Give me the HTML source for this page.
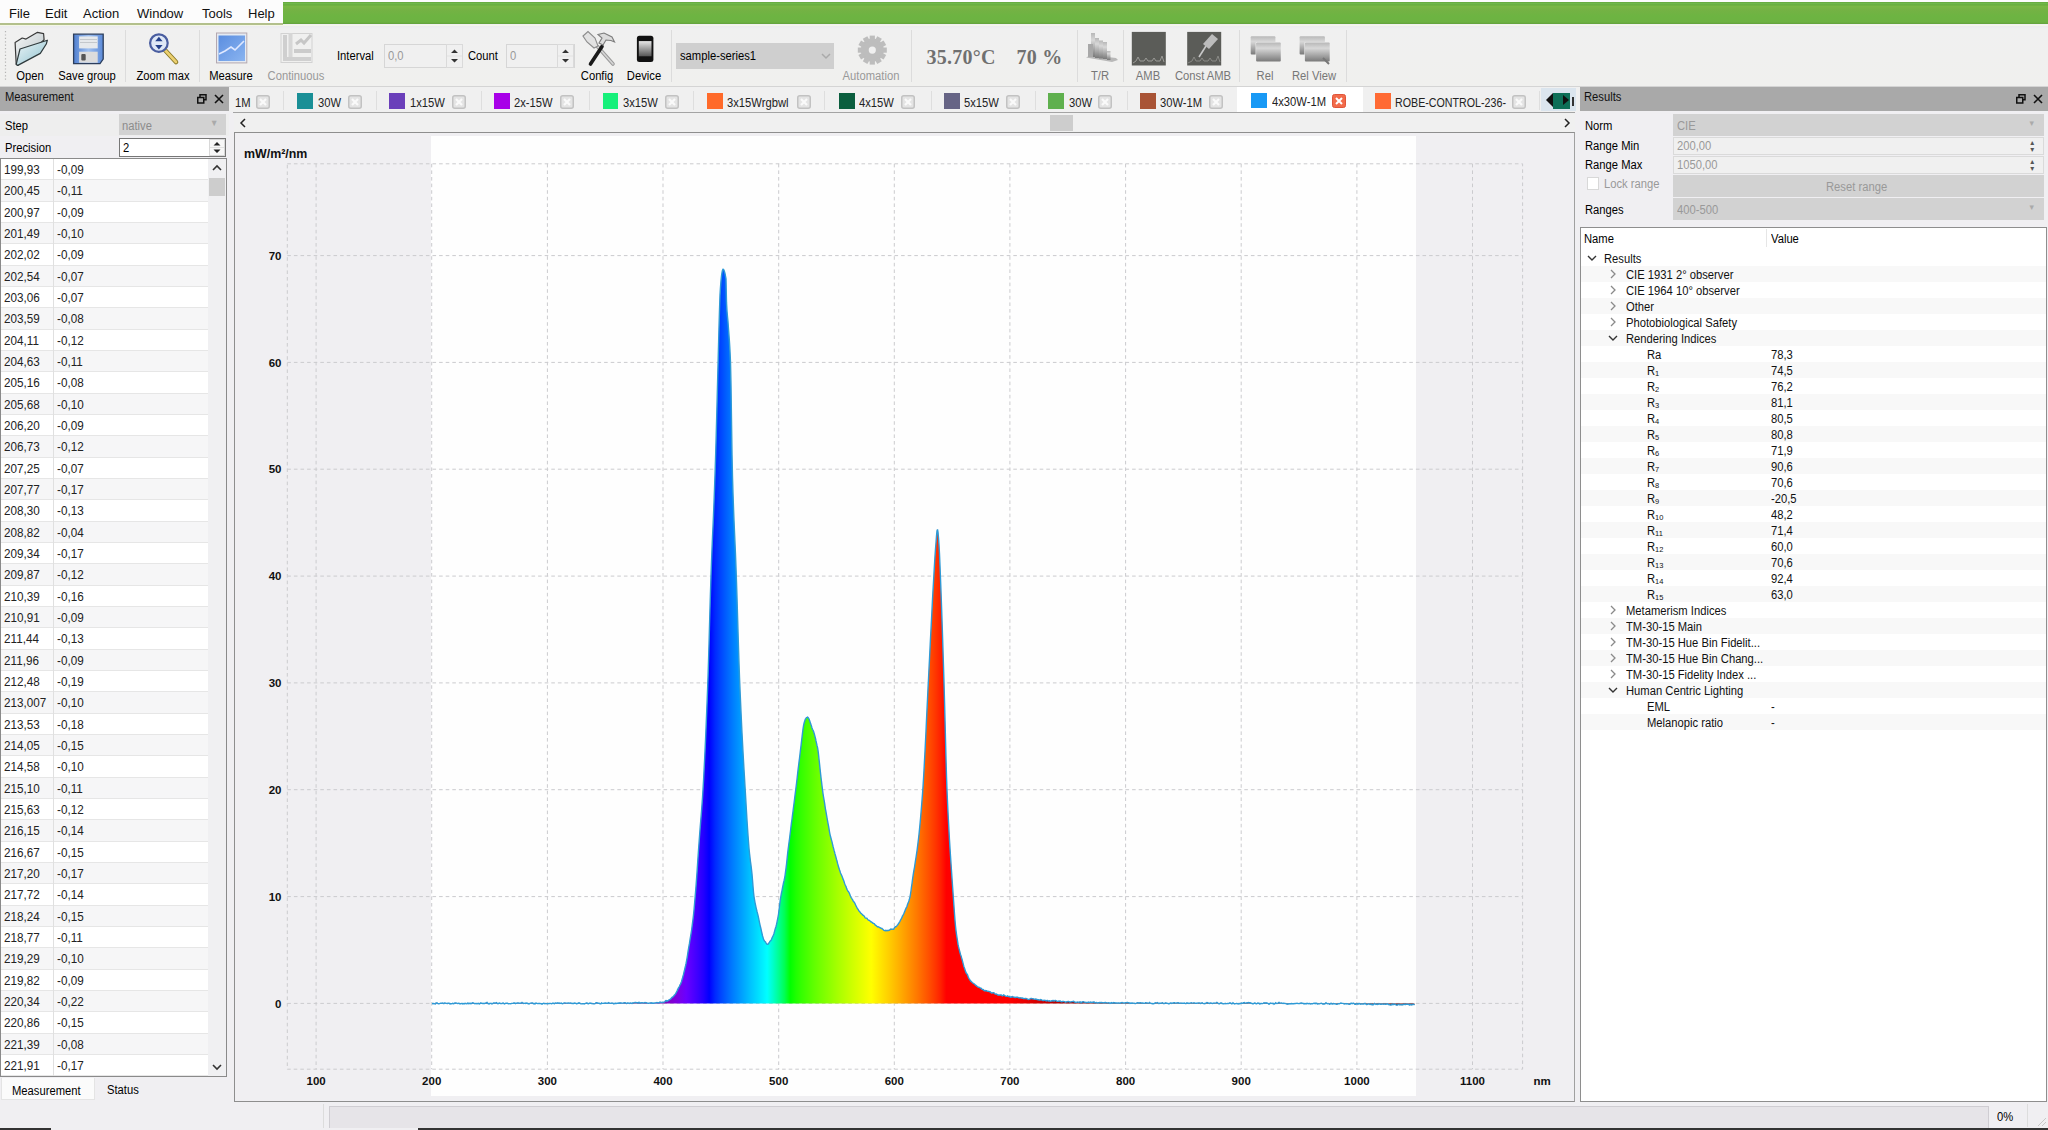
<!DOCTYPE html><html><head><meta charset="utf-8"><style>
*{box-sizing:border-box;margin:0;padding:0}
html,body{width:2048px;height:1130px;overflow:hidden;background:#f0eff2;font-family:"Liberation Sans", sans-serif;font-size:12px;color:#000}
.ab{position:absolute}
.t{position:absolute;white-space:nowrap;line-height:1;transform:scaleX(.935);transform-origin:0 0}
.c{transform-origin:50% 0}
.n{transform:none}
</style></head><body>
<div class="ab" style="left:0;top:0;width:2048px;height:23px;background:#fcfcfc"></div><div class="ab" style="left:283px;top:2px;width:1765px;height:22px;background:linear-gradient(#64a63c 0,#70b84a 1.5px,#66ac3c 3px,#7ab844 4px,#74b244 8px,#6db442 14px,#6db242 20px,#62a03c 22px)"></div><div class="ab" style="left:0;top:23px;width:283px;height:1.6px;background:#b3c08c"></div><div class="ab" style="left:0;top:24.5px;width:2048px;height:1.5px;background:#f4f7e6"></div><div class="t n" style="left:9px;top:7px;font-size:13px;color:#111">File</div><div class="t n" style="left:45px;top:7px;font-size:13px;color:#111">Edit</div><div class="t n" style="left:83px;top:7px;font-size:13px;color:#111">Action</div><div class="t n" style="left:137px;top:7px;font-size:13px;color:#111">Window</div><div class="t n" style="left:202px;top:7px;font-size:13px;color:#111">Tools</div><div class="t n" style="left:248px;top:7px;font-size:13px;color:#111">Help</div><div class="ab" style="left:0;top:26px;width:2048px;height:60px;background:linear-gradient(#ebebef 0,#f0f0f0 3px,#f0f0ee 100%)"></div><div class="ab" style="left:0;top:86px;width:2048px;height:1px;background:#d4d4d4"></div><div class="t c" style="left:-30px;width:120px;text-align:center;top:70px;font-size:12px;color:#000">Open</div><div class="t c" style="left:27px;width:120px;text-align:center;top:70px;font-size:12px;color:#000">Save group</div><div class="t c" style="left:103px;width:120px;text-align:center;top:70px;font-size:12px;color:#000">Zoom max</div><div class="t c" style="left:171px;width:120px;text-align:center;top:70px;font-size:12px;color:#000">Measure</div><div class="t c" style="left:236px;width:120px;text-align:center;top:70px;font-size:12px;color:#999">Continuous</div><div class="t c" style="left:537px;width:120px;text-align:center;top:70px;font-size:12px;color:#000">Config</div><div class="t c" style="left:584px;width:120px;text-align:center;top:70px;font-size:12px;color:#000">Device</div><div class="t c" style="left:811px;width:120px;text-align:center;top:70px;font-size:12px;color:#999">Automation</div><div class="t c" style="left:1040px;width:120px;text-align:center;top:70px;font-size:12px;color:#777">T/R</div><div class="t c" style="left:1088px;width:120px;text-align:center;top:70px;font-size:12px;color:#777">AMB</div><div class="t c" style="left:1143px;width:120px;text-align:center;top:70px;font-size:12px;color:#777">Const AMB</div><div class="t c" style="left:1205px;width:120px;text-align:center;top:70px;font-size:12px;color:#777">Rel</div><div class="t c" style="left:1254px;width:120px;text-align:center;top:70px;font-size:12px;color:#777">Rel View</div><div class="ab" style="left:125px;top:30px;width:1px;height:52px;background:#dcdcdc"></div><div class="ab" style="left:199px;top:30px;width:1px;height:52px;background:#dcdcdc"></div><div class="ab" style="left:671px;top:30px;width:1px;height:52px;background:#dcdcdc"></div><div class="ab" style="left:911px;top:30px;width:1px;height:52px;background:#dcdcdc"></div><div class="ab" style="left:1077px;top:30px;width:1px;height:52px;background:#dcdcdc"></div><div class="ab" style="left:1123px;top:30px;width:1px;height:52px;background:#dcdcdc"></div><div class="ab" style="left:1239px;top:30px;width:1px;height:52px;background:#dcdcdc"></div><div class="ab" style="left:1346px;top:30px;width:1px;height:52px;background:#dcdcdc"></div><div class="t" style="left:337px;top:50px;font-size:12px">Interval</div><div class="ab" style="left:384px;top:44px;width:79px;height:24px;border:1px solid #d6d6d6;background:#f0f0f0"></div><div class="t" style="left:388px;top:50px;font-size:12px;color:#999">0,0</div><div class="t" style="left:468px;top:50px;font-size:12px">Count</div><div class="ab" style="left:506px;top:44px;width:69px;height:24px;border:1px solid #d6d6d6;background:#f0f0f0"></div><div class="t" style="left:510px;top:50px;font-size:12px;color:#999">0</div><div class="ab" style="left:676px;top:43px;width:158px;height:26px;background:#cfcfcf"></div><div class="t" style="left:680px;top:50px;font-size:12px">sample-series1</div><svg class="ab" style="left:820px;top:52px" width="12" height="8"><path d="M2 2 L6 6 L10 2" fill="none" stroke="#aaa" stroke-width="1.5"/></svg><svg class="ab" style="left:446px;top:44px" width="17" height="24"><rect x="0.5" y="0.5" width="16" height="23" fill="#f0f0f0" stroke="#dadada"/><line x1="1" y1="12" x2="16" y2="12" stroke="#e2e2e2"/><path d="M5 9 L8.5 5.5 L12 9 Z M5 15 L8.5 18.5 L12 15 Z" fill="#333"/></svg><svg class="ab" style="left:557px;top:44px" width="17" height="24"><rect x="0.5" y="0.5" width="16" height="23" fill="#f0f0f0" stroke="#dadada"/><line x1="1" y1="12" x2="16" y2="12" stroke="#e2e2e2"/><path d="M5 9 L8.5 5.5 L12 9 Z M5 15 L8.5 18.5 L12 15 Z" fill="#333"/></svg><div class="t" style="left:926.5px;top:46.8px;font-family:'Liberation Serif',serif;font-size:20px;font-weight:bold;color:#707070;transform:none;letter-spacing:.25px">35.70°C</div><div class="t" style="left:1016.5px;top:46.8px;font-family:'Liberation Serif',serif;font-size:20px;font-weight:bold;color:#707070;transform:none;letter-spacing:.25px">70 %</div>
<svg class="ab" style="left:0;top:0" width="1400" height="90" viewBox="0 0 1400 90">
<defs>
 <linearGradient id="fg1" x1="0" y1="0" x2="1" y2="1"><stop offset="0" stop-color="#f4f6f6"/><stop offset="1" stop-color="#b8c2c6"/></linearGradient>
 <linearGradient id="fg2" x1="0" y1="0" x2="1" y2="1"><stop offset="0" stop-color="#eef6f8"/><stop offset="1" stop-color="#8fc2cf"/></linearGradient>
 <linearGradient id="sv" x1="0" y1="0" x2="1" y2="0"><stop offset="0" stop-color="#4f7fd0"/><stop offset=".5" stop-color="#9fc0f0"/><stop offset="1" stop-color="#5b8ad8"/></linearGradient>
 <linearGradient id="ph" x1="0" y1="0" x2="0" y2="1"><stop offset="0" stop-color="#e8e8e8"/><stop offset="1" stop-color="#555"/></linearGradient>
 <linearGradient id="rl" x1="0" y1="0" x2="0" y2="1"><stop offset="0" stop-color="#b8b8b8"/><stop offset=".3" stop-color="#d8d8d8"/><stop offset="1" stop-color="#7a7a7a"/></linearGradient>
 <linearGradient id="ms" x1="0" y1="0" x2="1" y2="1"><stop offset="0" stop-color="#5b8ee0"/><stop offset="1" stop-color="#8ab4f0"/></linearGradient>
</defs>
<!-- Open -->
<path d="M15.1 42.4 L22.2 38 L26 39.1 L37.5 32.3 L43.6 33.7 L44.1 39.7 L17.8 65.4 L16.2 64.3 Z" fill="url(#fg1)" stroke="#3a3a3a" stroke-width="1.2" stroke-linejoin="round"/>
<path d="M20 49 L47.4 40.2 L46.3 44 L40.3 53.4 L17.8 65.4 L16.2 64.3 Z" fill="url(#fg2)" stroke="#2f3a3c" stroke-width="1.2" stroke-linejoin="round"/>
<!-- Save -->
<path d="M73.6 34.2 H103.2 V59 L100 63.7 H73.6 Z" fill="url(#sv)" stroke="#2c3e5c" stroke-width="1.3"/>
<rect x="79.1" y="36.4" width="18.6" height="12" fill="#e6e9ec"/>
<line x1="80" y1="39.5" x2="97" y2="39.5" stroke="#c4c8cc" stroke-width="1"/><line x1="80" y1="42.5" x2="97" y2="42.5" stroke="#c4c8cc" stroke-width="1"/>
<rect x="79.1" y="51.7" width="18.6" height="11" fill="#dcdcdc"/>
<rect x="81.3" y="53.9" width="4.4" height="6.6" rx="1" fill="#555"/>
<!-- Zoom max -->
<line x1="164" y1="49" x2="176" y2="62" stroke="#8a7a28" stroke-width="4.6" stroke-linecap="round"/>
<line x1="164" y1="49" x2="176" y2="62" stroke="#ecd070" stroke-width="2.6" stroke-linecap="round"/>
<circle cx="158.9" cy="43.1" r="8.8" fill="#dfe8f6" stroke="#4a5ea0" stroke-width="2.2"/>
<path d="M158.9 36.8 L162.6 41.2 H155.2 Z M158.9 49.4 L162.6 45 H155.2 Z" fill="#24408a"/>
<!-- Measure -->
<rect x="216.5" y="33" width="30.3" height="29.9" fill="#e4eaf2" stroke="#b4a8b0" stroke-width="1"/>
<rect x="218.5" y="35.5" width="26.5" height="25.5" fill="url(#ms)"/>
<path d="M219 54 L225 51 L231 47 L235 50 L244 41" fill="none" stroke="#dfe8ff" stroke-width="1.6"/>
<!-- Continuous -->
<rect x="281" y="33.5" width="31" height="29" fill="none" stroke="#d2d2d2" stroke-width="1"/>
<rect x="283" y="35" width="4" height="22" fill="#cfcfcf"/><rect x="288.5" y="33" width="4" height="24" fill="#d6d6d6"/>
<path d="M296 44 L301 40 L304 43 L311 35" stroke="#c6c6c6" stroke-width="3" fill="none"/>
<rect x="294" y="49" width="17" height="4" fill="#cbcbcb"/><rect x="283" y="57" width="28" height="4" fill="#d0d0d0"/>
<!-- Config -->
<path d="M597.5 46.5 L613 64" stroke="#9a9a9a" stroke-width="3.6" stroke-linecap="round"/>
<path d="M597.5 46.5 L613 64" stroke="#d6d6d6" stroke-width="1.6" stroke-linecap="round"/>
<path d="M583 36 L588 31.5 L595 38 L598 46 L594 48 L587 42 Z" fill="#e2e2e2" stroke="#8c8c8c" stroke-width="1.1"/>
<path d="M602 46.5 L590.5 64" stroke="#1a1a1a" stroke-width="3.6" stroke-linecap="round"/>
<path d="M598 34.5 L604 33 L612 37 L614.5 42 L611 40.5 L606 40 L603 45 L599 43 L602 38 Z" fill="#dcdcdc" stroke="#7c7c7c" stroke-width="1.1"/>
<!-- Device -->
<rect x="636.9" y="35.8" width="16.5" height="26.3" rx="2.5" fill="#111"/>
<rect x="638.8" y="41.1" width="12.7" height="15.2" fill="url(#ph)"/>
<!-- Automation gear -->
<g transform="translate(872.3 50.1)" fill="#bdbdbd">
 <circle r="11.5"/>
 <rect x="-2.6" y="-14.5" width="5.2" height="5" transform="rotate(0)"/><rect x="-2.6" y="-14.5" width="5.2" height="5" transform="rotate(30)"/><rect x="-2.6" y="-14.5" width="5.2" height="5" transform="rotate(60)"/><rect x="-2.6" y="-14.5" width="5.2" height="5" transform="rotate(90)"/><rect x="-2.6" y="-14.5" width="5.2" height="5" transform="rotate(120)"/><rect x="-2.6" y="-14.5" width="5.2" height="5" transform="rotate(150)"/><rect x="-2.6" y="-14.5" width="5.2" height="5" transform="rotate(180)"/><rect x="-2.6" y="-14.5" width="5.2" height="5" transform="rotate(210)"/><rect x="-2.6" y="-14.5" width="5.2" height="5" transform="rotate(240)"/><rect x="-2.6" y="-14.5" width="5.2" height="5" transform="rotate(270)"/><rect x="-2.6" y="-14.5" width="5.2" height="5" transform="rotate(300)"/><rect x="-2.6" y="-14.5" width="5.2" height="5" transform="rotate(330)"/>
 <circle r="3.6" fill="#f0f0f0"/>
</g>
<!-- T/R -->
<path d="M1086 57.5 L1112 62 L1118 60 L1116 58 L1091 55 Z" fill="#b8b8b8"/>
<rect x="1091" y="33" width="4" height="24" fill="url(#rl)"/><rect x="1095" y="38" width="4" height="20" fill="url(#rl)"/>
<rect x="1099" y="40.5" width="4" height="18" fill="url(#rl)"/><rect x="1103" y="42" width="4" height="17" fill="url(#rl)"/>
<rect x="1107" y="51" width="3.5" height="9" fill="url(#rl)"/><rect x="1088" y="44" width="5" height="13" fill="#a8a8a8"/>
<!-- AMB -->
<rect x="1131.8" y="31.9" width="34" height="33.6" fill="#5b5c58"/>
<path d="M1133 63 L1136 61 L1138 57 L1140 61 L1144 61 L1146 58 L1148 61 L1152 61 L1154 58 L1156 61 L1160 61 L1162 56 L1164 62" fill="none" stroke="#9a9a96" stroke-width="1"/>
<!-- Const AMB -->
<rect x="1187.2" y="31.9" width="34" height="33.6" fill="#5b5c58"/>
<path d="M1188 63 L1192 61 L1194 57 L1196 61 L1200 61 L1202 58 L1204 61 L1208 61 L1210 58 L1212 61 L1216 61 L1218 56 L1220 62" fill="none" stroke="#8a8a86" stroke-width="1"/>
<path d="M1199 57 L1206 46" stroke="#c8c8c8" stroke-width="1.6"/>
<path d="M1203 44 L1212 34 L1218 39 L1209 49 Z" fill="#bcbcbc"/>
<!-- Rel -->
<rect x="1250.7" y="36.2" width="24.7" height="18.3" rx="1" fill="url(#rl)"/>
<rect x="1255.6" y="42.1" width="25.2" height="19.3" rx="1" fill="#f0f0f0"/>
<rect x="1256.1" y="42.6" width="24.7" height="18.8" rx="1" fill="url(#rl)"/>
<!-- Rel View -->
<rect x="1299.6" y="36.2" width="25.3" height="18.3" rx="1" fill="url(#rl)"/>
<rect x="1304.4" y="42.1" width="25.3" height="19.3" rx="1" fill="#f0f0f0"/>
<rect x="1304.9" y="42.6" width="24.8" height="18.8" rx="1" fill="url(#rl)"/>
<path d="M1323 58 L1329 64" stroke="#777" stroke-width="2"/>
</svg>
<svg class="ab" style="left:4px;top:30px" width="3" height="52"><line x1="1.5" y1="1" x2="1.5" y2="52" stroke="#b4b4b4" stroke-width="1.2" stroke-dasharray="1.2 2.2"/></svg><div class="ab" style="left:0;top:87px;width:229px;height:24px;background:#a9a9a9"></div><div class="t" style="left:5px;top:91px;font-size:12px;color:#111">Measurement</div><svg class="ab" style="left:197px;top:94px" width="10" height="10" viewBox="0 0 10 10"><rect x="3" y="0.75" width="6" height="5" fill="none" stroke="#111" stroke-width="1.5"/><rect x="0.75" y="3.5" width="6" height="5.5" fill="#a9a9a9" stroke="#111" stroke-width="1.5"/></svg><svg class="ab" style="left:214px;top:94px" width="10" height="10" viewBox="0 0 10 10"><path d="M1 1 L9 9 M9 1 L1 9" stroke="#111" stroke-width="1.6"/></svg><div class="ab" style="left:0;top:114px;width:229px;height:22px;background:#eeeeee"></div><div class="t" style="left:5px;top:120px">Step</div><div class="ab" style="left:119px;top:114px;width:107px;height:21px;background:#d2d2d2"></div><div class="t" style="left:122px;top:120px;color:#8c8c8c">native</div><div class="t" style="left:210px;top:119px;color:#aaa;font-size:9px">&#9660;</div><div class="t" style="left:5px;top:142px">Precision</div><div class="ab" style="left:119px;top:138px;width:107px;height:19px;background:#fff;border:1px solid #777"></div><div class="t" style="left:123px;top:142px">2</div><svg class="ab" style="left:209px;top:139px" width="16" height="17"><rect x="0.5" y="0.5" width="15" height="16" fill="#f7f7f7" stroke="#d8d8d8"/><line x1="1" y1="8.5" x2="15" y2="8.5" stroke="#e0e0e0"/><path d="M4.5 6.5 L8 3 L11.5 6.5 Z M4.5 10.5 L8 14 L11.5 10.5 Z" fill="#222"/></svg><div class="ab" style="left:0;top:158px;width:227px;height:919px;background:#fff;border:1px solid #8a8a8a"></div><div class="ab" style="left:1px;top:159.00px;width:207px;height:21.33px;background:#fff;border-bottom:1px solid #e6e6e6"></div><div class="t" style="left:4px;top:164.00px;font-size:12.5px;color:#222">199,93</div><div class="t" style="left:57px;top:164.00px;font-size:12.5px;color:#222">-0,09</div><div class="ab" style="left:1px;top:180.33px;width:207px;height:21.33px;background:#f6f6f7;border-bottom:1px solid #e6e6e6"></div><div class="t" style="left:4px;top:185.33px;font-size:12.5px;color:#222">200,45</div><div class="t" style="left:57px;top:185.33px;font-size:12.5px;color:#222">-0,11</div><div class="ab" style="left:1px;top:201.66px;width:207px;height:21.33px;background:#fff;border-bottom:1px solid #e6e6e6"></div><div class="t" style="left:4px;top:206.66px;font-size:12.5px;color:#222">200,97</div><div class="t" style="left:57px;top:206.66px;font-size:12.5px;color:#222">-0,09</div><div class="ab" style="left:1px;top:222.99px;width:207px;height:21.33px;background:#f6f6f7;border-bottom:1px solid #e6e6e6"></div><div class="t" style="left:4px;top:227.99px;font-size:12.5px;color:#222">201,49</div><div class="t" style="left:57px;top:227.99px;font-size:12.5px;color:#222">-0,10</div><div class="ab" style="left:1px;top:244.32px;width:207px;height:21.33px;background:#fff;border-bottom:1px solid #e6e6e6"></div><div class="t" style="left:4px;top:249.32px;font-size:12.5px;color:#222">202,02</div><div class="t" style="left:57px;top:249.32px;font-size:12.5px;color:#222">-0,09</div><div class="ab" style="left:1px;top:265.65px;width:207px;height:21.33px;background:#f6f6f7;border-bottom:1px solid #e6e6e6"></div><div class="t" style="left:4px;top:270.65px;font-size:12.5px;color:#222">202,54</div><div class="t" style="left:57px;top:270.65px;font-size:12.5px;color:#222">-0,07</div><div class="ab" style="left:1px;top:286.98px;width:207px;height:21.33px;background:#fff;border-bottom:1px solid #e6e6e6"></div><div class="t" style="left:4px;top:291.98px;font-size:12.5px;color:#222">203,06</div><div class="t" style="left:57px;top:291.98px;font-size:12.5px;color:#222">-0,07</div><div class="ab" style="left:1px;top:308.31px;width:207px;height:21.33px;background:#f6f6f7;border-bottom:1px solid #e6e6e6"></div><div class="t" style="left:4px;top:313.31px;font-size:12.5px;color:#222">203,59</div><div class="t" style="left:57px;top:313.31px;font-size:12.5px;color:#222">-0,08</div><div class="ab" style="left:1px;top:329.64px;width:207px;height:21.33px;background:#fff;border-bottom:1px solid #e6e6e6"></div><div class="t" style="left:4px;top:334.64px;font-size:12.5px;color:#222">204,11</div><div class="t" style="left:57px;top:334.64px;font-size:12.5px;color:#222">-0,12</div><div class="ab" style="left:1px;top:350.97px;width:207px;height:21.33px;background:#f6f6f7;border-bottom:1px solid #e6e6e6"></div><div class="t" style="left:4px;top:355.97px;font-size:12.5px;color:#222">204,63</div><div class="t" style="left:57px;top:355.97px;font-size:12.5px;color:#222">-0,11</div><div class="ab" style="left:1px;top:372.30px;width:207px;height:21.33px;background:#fff;border-bottom:1px solid #e6e6e6"></div><div class="t" style="left:4px;top:377.30px;font-size:12.5px;color:#222">205,16</div><div class="t" style="left:57px;top:377.30px;font-size:12.5px;color:#222">-0,08</div><div class="ab" style="left:1px;top:393.63px;width:207px;height:21.33px;background:#f6f6f7;border-bottom:1px solid #e6e6e6"></div><div class="t" style="left:4px;top:398.63px;font-size:12.5px;color:#222">205,68</div><div class="t" style="left:57px;top:398.63px;font-size:12.5px;color:#222">-0,10</div><div class="ab" style="left:1px;top:414.96px;width:207px;height:21.33px;background:#fff;border-bottom:1px solid #e6e6e6"></div><div class="t" style="left:4px;top:419.96px;font-size:12.5px;color:#222">206,20</div><div class="t" style="left:57px;top:419.96px;font-size:12.5px;color:#222">-0,09</div><div class="ab" style="left:1px;top:436.29px;width:207px;height:21.33px;background:#f6f6f7;border-bottom:1px solid #e6e6e6"></div><div class="t" style="left:4px;top:441.29px;font-size:12.5px;color:#222">206,73</div><div class="t" style="left:57px;top:441.29px;font-size:12.5px;color:#222">-0,12</div><div class="ab" style="left:1px;top:457.62px;width:207px;height:21.33px;background:#fff;border-bottom:1px solid #e6e6e6"></div><div class="t" style="left:4px;top:462.62px;font-size:12.5px;color:#222">207,25</div><div class="t" style="left:57px;top:462.62px;font-size:12.5px;color:#222">-0,07</div><div class="ab" style="left:1px;top:478.95px;width:207px;height:21.33px;background:#f6f6f7;border-bottom:1px solid #e6e6e6"></div><div class="t" style="left:4px;top:483.95px;font-size:12.5px;color:#222">207,77</div><div class="t" style="left:57px;top:483.95px;font-size:12.5px;color:#222">-0,17</div><div class="ab" style="left:1px;top:500.28px;width:207px;height:21.33px;background:#fff;border-bottom:1px solid #e6e6e6"></div><div class="t" style="left:4px;top:505.28px;font-size:12.5px;color:#222">208,30</div><div class="t" style="left:57px;top:505.28px;font-size:12.5px;color:#222">-0,13</div><div class="ab" style="left:1px;top:521.61px;width:207px;height:21.33px;background:#f6f6f7;border-bottom:1px solid #e6e6e6"></div><div class="t" style="left:4px;top:526.61px;font-size:12.5px;color:#222">208,82</div><div class="t" style="left:57px;top:526.61px;font-size:12.5px;color:#222">-0,04</div><div class="ab" style="left:1px;top:542.94px;width:207px;height:21.33px;background:#fff;border-bottom:1px solid #e6e6e6"></div><div class="t" style="left:4px;top:547.94px;font-size:12.5px;color:#222">209,34</div><div class="t" style="left:57px;top:547.94px;font-size:12.5px;color:#222">-0,17</div><div class="ab" style="left:1px;top:564.27px;width:207px;height:21.33px;background:#f6f6f7;border-bottom:1px solid #e6e6e6"></div><div class="t" style="left:4px;top:569.27px;font-size:12.5px;color:#222">209,87</div><div class="t" style="left:57px;top:569.27px;font-size:12.5px;color:#222">-0,12</div><div class="ab" style="left:1px;top:585.60px;width:207px;height:21.33px;background:#fff;border-bottom:1px solid #e6e6e6"></div><div class="t" style="left:4px;top:590.60px;font-size:12.5px;color:#222">210,39</div><div class="t" style="left:57px;top:590.60px;font-size:12.5px;color:#222">-0,16</div><div class="ab" style="left:1px;top:606.93px;width:207px;height:21.33px;background:#f6f6f7;border-bottom:1px solid #e6e6e6"></div><div class="t" style="left:4px;top:611.93px;font-size:12.5px;color:#222">210,91</div><div class="t" style="left:57px;top:611.93px;font-size:12.5px;color:#222">-0,09</div><div class="ab" style="left:1px;top:628.26px;width:207px;height:21.33px;background:#fff;border-bottom:1px solid #e6e6e6"></div><div class="t" style="left:4px;top:633.26px;font-size:12.5px;color:#222">211,44</div><div class="t" style="left:57px;top:633.26px;font-size:12.5px;color:#222">-0,13</div><div class="ab" style="left:1px;top:649.59px;width:207px;height:21.33px;background:#f6f6f7;border-bottom:1px solid #e6e6e6"></div><div class="t" style="left:4px;top:654.59px;font-size:12.5px;color:#222">211,96</div><div class="t" style="left:57px;top:654.59px;font-size:12.5px;color:#222">-0,09</div><div class="ab" style="left:1px;top:670.92px;width:207px;height:21.33px;background:#fff;border-bottom:1px solid #e6e6e6"></div><div class="t" style="left:4px;top:675.92px;font-size:12.5px;color:#222">212,48</div><div class="t" style="left:57px;top:675.92px;font-size:12.5px;color:#222">-0,19</div><div class="ab" style="left:1px;top:692.25px;width:207px;height:21.33px;background:#f6f6f7;border-bottom:1px solid #e6e6e6"></div><div class="t" style="left:4px;top:697.25px;font-size:12.5px;color:#222">213,007</div><div class="t" style="left:57px;top:697.25px;font-size:12.5px;color:#222">-0,10</div><div class="ab" style="left:1px;top:713.58px;width:207px;height:21.33px;background:#fff;border-bottom:1px solid #e6e6e6"></div><div class="t" style="left:4px;top:718.58px;font-size:12.5px;color:#222">213,53</div><div class="t" style="left:57px;top:718.58px;font-size:12.5px;color:#222">-0,18</div><div class="ab" style="left:1px;top:734.91px;width:207px;height:21.33px;background:#f6f6f7;border-bottom:1px solid #e6e6e6"></div><div class="t" style="left:4px;top:739.91px;font-size:12.5px;color:#222">214,05</div><div class="t" style="left:57px;top:739.91px;font-size:12.5px;color:#222">-0,15</div><div class="ab" style="left:1px;top:756.24px;width:207px;height:21.33px;background:#fff;border-bottom:1px solid #e6e6e6"></div><div class="t" style="left:4px;top:761.24px;font-size:12.5px;color:#222">214,58</div><div class="t" style="left:57px;top:761.24px;font-size:12.5px;color:#222">-0,10</div><div class="ab" style="left:1px;top:777.57px;width:207px;height:21.33px;background:#f6f6f7;border-bottom:1px solid #e6e6e6"></div><div class="t" style="left:4px;top:782.57px;font-size:12.5px;color:#222">215,10</div><div class="t" style="left:57px;top:782.57px;font-size:12.5px;color:#222">-0,11</div><div class="ab" style="left:1px;top:798.90px;width:207px;height:21.33px;background:#fff;border-bottom:1px solid #e6e6e6"></div><div class="t" style="left:4px;top:803.90px;font-size:12.5px;color:#222">215,63</div><div class="t" style="left:57px;top:803.90px;font-size:12.5px;color:#222">-0,12</div><div class="ab" style="left:1px;top:820.23px;width:207px;height:21.33px;background:#f6f6f7;border-bottom:1px solid #e6e6e6"></div><div class="t" style="left:4px;top:825.23px;font-size:12.5px;color:#222">216,15</div><div class="t" style="left:57px;top:825.23px;font-size:12.5px;color:#222">-0,14</div><div class="ab" style="left:1px;top:841.56px;width:207px;height:21.33px;background:#fff;border-bottom:1px solid #e6e6e6"></div><div class="t" style="left:4px;top:846.56px;font-size:12.5px;color:#222">216,67</div><div class="t" style="left:57px;top:846.56px;font-size:12.5px;color:#222">-0,15</div><div class="ab" style="left:1px;top:862.89px;width:207px;height:21.33px;background:#f6f6f7;border-bottom:1px solid #e6e6e6"></div><div class="t" style="left:4px;top:867.89px;font-size:12.5px;color:#222">217,20</div><div class="t" style="left:57px;top:867.89px;font-size:12.5px;color:#222">-0,17</div><div class="ab" style="left:1px;top:884.22px;width:207px;height:21.33px;background:#fff;border-bottom:1px solid #e6e6e6"></div><div class="t" style="left:4px;top:889.22px;font-size:12.5px;color:#222">217,72</div><div class="t" style="left:57px;top:889.22px;font-size:12.5px;color:#222">-0,14</div><div class="ab" style="left:1px;top:905.55px;width:207px;height:21.33px;background:#f6f6f7;border-bottom:1px solid #e6e6e6"></div><div class="t" style="left:4px;top:910.55px;font-size:12.5px;color:#222">218,24</div><div class="t" style="left:57px;top:910.55px;font-size:12.5px;color:#222">-0,15</div><div class="ab" style="left:1px;top:926.88px;width:207px;height:21.33px;background:#fff;border-bottom:1px solid #e6e6e6"></div><div class="t" style="left:4px;top:931.88px;font-size:12.5px;color:#222">218,77</div><div class="t" style="left:57px;top:931.88px;font-size:12.5px;color:#222">-0,11</div><div class="ab" style="left:1px;top:948.21px;width:207px;height:21.33px;background:#f6f6f7;border-bottom:1px solid #e6e6e6"></div><div class="t" style="left:4px;top:953.21px;font-size:12.5px;color:#222">219,29</div><div class="t" style="left:57px;top:953.21px;font-size:12.5px;color:#222">-0,10</div><div class="ab" style="left:1px;top:969.54px;width:207px;height:21.33px;background:#fff;border-bottom:1px solid #e6e6e6"></div><div class="t" style="left:4px;top:974.54px;font-size:12.5px;color:#222">219,82</div><div class="t" style="left:57px;top:974.54px;font-size:12.5px;color:#222">-0,09</div><div class="ab" style="left:1px;top:990.87px;width:207px;height:21.33px;background:#f6f6f7;border-bottom:1px solid #e6e6e6"></div><div class="t" style="left:4px;top:995.87px;font-size:12.5px;color:#222">220,34</div><div class="t" style="left:57px;top:995.87px;font-size:12.5px;color:#222">-0,22</div><div class="ab" style="left:1px;top:1012.20px;width:207px;height:21.33px;background:#fff;border-bottom:1px solid #e6e6e6"></div><div class="t" style="left:4px;top:1017.20px;font-size:12.5px;color:#222">220,86</div><div class="t" style="left:57px;top:1017.20px;font-size:12.5px;color:#222">-0,15</div><div class="ab" style="left:1px;top:1033.53px;width:207px;height:21.33px;background:#f6f6f7;border-bottom:1px solid #e6e6e6"></div><div class="t" style="left:4px;top:1038.53px;font-size:12.5px;color:#222">221,39</div><div class="t" style="left:57px;top:1038.53px;font-size:12.5px;color:#222">-0,08</div><div class="ab" style="left:1px;top:1054.86px;width:207px;height:21.33px;background:#fff;border-bottom:1px solid #e6e6e6"></div><div class="t" style="left:4px;top:1059.86px;font-size:12.5px;color:#222">221,91</div><div class="t" style="left:57px;top:1059.86px;font-size:12.5px;color:#222">-0,17</div><div class="ab" style="left:53px;top:159px;width:1px;height:917px;background:#e0e0e0"></div><div class="ab" style="left:208px;top:159px;width:18px;height:917px;background:#f0f0f2"></div><div class="ab" style="left:209px;top:178px;width:16px;height:18px;background:#cdcdcd"></div><svg class="ab" style="left:211px;top:163px" width="12" height="10"><path d="M2 7 L6 3 L10 7" fill="none" stroke="#333" stroke-width="1.6"/></svg><svg class="ab" style="left:211px;top:1062px" width="12" height="10"><path d="M2 3 L6 7 L10 3" fill="none" stroke="#333" stroke-width="1.6"/></svg><div class="ab" style="left:1px;top:1078px;width:94px;height:22px;background:#fbfbfb;border:1px solid #e4e4e4;border-top:none"></div><div class="t" style="left:12px;top:1085px">Measurement</div><div class="t" style="left:107px;top:1084px">Status</div><div class="ab" style="left:229px;top:87px;width:1351px;height:25px;background:#f0f0f0"></div><div class="ab" style="left:233px;top:111.5px;width:1342px;height:1px;background:#a4a4a4"></div><div class="ab" style="left:283px;top:91px;width:1px;height:19px;background:#dedede"></div><div class="t" style="left:235px;top:97px;font-size:12px;color:#222;transform:scaleX(.935)">1M</div><svg class="ab" style="left:256px;top:95px" width="14" height="14"><rect x="0.75" y="0.75" width="12.5" height="12.5" rx="2" fill="#e4e4e4" stroke="#c2c2c2" stroke-width="1.5"/><path d="M4 4 L10 10 M10 4 L4 10" stroke="#fafafa" stroke-width="2.2"/></svg><div class="ab" style="left:376px;top:91px;width:1px;height:19px;background:#dedede"></div><div class="ab" style="left:297px;top:93px;width:15.5px;height:15.5px;background:#1a8f96"></div><div class="t" style="left:318px;top:97px;font-size:12px;color:#222;transform:scaleX(.935)">30W</div><svg class="ab" style="left:348px;top:95px" width="14" height="14"><rect x="0.75" y="0.75" width="12.5" height="12.5" rx="2" fill="#e4e4e4" stroke="#c2c2c2" stroke-width="1.5"/><path d="M4 4 L10 10 M10 4 L4 10" stroke="#fafafa" stroke-width="2.2"/></svg><div class="ab" style="left:480.6px;top:91px;width:1px;height:19px;background:#dedede"></div><div class="ab" style="left:389px;top:93px;width:15.5px;height:15.5px;background:#6a3fba"></div><div class="t" style="left:410px;top:97px;font-size:12px;color:#222;transform:scaleX(.935)">1x15W</div><svg class="ab" style="left:451.5px;top:95px" width="14" height="14"><rect x="0.75" y="0.75" width="12.5" height="12.5" rx="2" fill="#e4e4e4" stroke="#c2c2c2" stroke-width="1.5"/><path d="M4 4 L10 10 M10 4 L4 10" stroke="#fafafa" stroke-width="2.2"/></svg><div class="ab" style="left:588.5px;top:91px;width:1px;height:19px;background:#dedede"></div><div class="ab" style="left:494px;top:93px;width:15.5px;height:15.5px;background:#a800e8"></div><div class="t" style="left:514px;top:97px;font-size:12px;color:#222;transform:scaleX(.935)">2x-15W</div><svg class="ab" style="left:560px;top:95px" width="14" height="14"><rect x="0.75" y="0.75" width="12.5" height="12.5" rx="2" fill="#e4e4e4" stroke="#c2c2c2" stroke-width="1.5"/><path d="M4 4 L10 10 M10 4 L4 10" stroke="#fafafa" stroke-width="2.2"/></svg><div class="ab" style="left:693px;top:91px;width:1px;height:19px;background:#dedede"></div><div class="ab" style="left:602.5px;top:93px;width:15.5px;height:15.5px;background:#16f07a"></div><div class="t" style="left:622.7px;top:97px;font-size:12px;color:#222;transform:scaleX(.935)">3x15W</div><svg class="ab" style="left:665px;top:95px" width="14" height="14"><rect x="0.75" y="0.75" width="12.5" height="12.5" rx="2" fill="#e4e4e4" stroke="#c2c2c2" stroke-width="1.5"/><path d="M4 4 L10 10 M10 4 L4 10" stroke="#fafafa" stroke-width="2.2"/></svg><div class="ab" style="left:824px;top:91px;width:1px;height:19px;background:#dedede"></div><div class="ab" style="left:707px;top:93px;width:15.5px;height:15.5px;background:#ff6a2a"></div><div class="t" style="left:727px;top:97px;font-size:12px;color:#222;transform:scaleX(.935)">3x15Wrgbwl</div><svg class="ab" style="left:797px;top:95px" width="14" height="14"><rect x="0.75" y="0.75" width="12.5" height="12.5" rx="2" fill="#e4e4e4" stroke="#c2c2c2" stroke-width="1.5"/><path d="M4 4 L10 10 M10 4 L4 10" stroke="#fafafa" stroke-width="2.2"/></svg><div class="ab" style="left:931px;top:91px;width:1px;height:19px;background:#dedede"></div><div class="ab" style="left:839px;top:93px;width:15.5px;height:15.5px;background:#0b5e3e"></div><div class="t" style="left:859px;top:97px;font-size:12px;color:#222;transform:scaleX(.935)">4x15W</div><svg class="ab" style="left:901px;top:95px" width="14" height="14"><rect x="0.75" y="0.75" width="12.5" height="12.5" rx="2" fill="#e4e4e4" stroke="#c2c2c2" stroke-width="1.5"/><path d="M4 4 L10 10 M10 4 L4 10" stroke="#fafafa" stroke-width="2.2"/></svg><div class="ab" style="left:1034.7px;top:91px;width:1px;height:19px;background:#dedede"></div><div class="ab" style="left:944px;top:93px;width:15.5px;height:15.5px;background:#666485"></div><div class="t" style="left:964px;top:97px;font-size:12px;color:#222;transform:scaleX(.935)">5x15W</div><svg class="ab" style="left:1006px;top:95px" width="14" height="14"><rect x="0.75" y="0.75" width="12.5" height="12.5" rx="2" fill="#e4e4e4" stroke="#c2c2c2" stroke-width="1.5"/><path d="M4 4 L10 10 M10 4 L4 10" stroke="#fafafa" stroke-width="2.2"/></svg><div class="ab" style="left:1127px;top:91px;width:1px;height:19px;background:#dedede"></div><div class="ab" style="left:1048.4px;top:93px;width:15.5px;height:15.5px;background:#5fb04e"></div><div class="t" style="left:1069px;top:97px;font-size:12px;color:#222;transform:scaleX(.935)">30W</div><svg class="ab" style="left:1098px;top:95px" width="14" height="14"><rect x="0.75" y="0.75" width="12.5" height="12.5" rx="2" fill="#e4e4e4" stroke="#c2c2c2" stroke-width="1.5"/><path d="M4 4 L10 10 M10 4 L4 10" stroke="#fafafa" stroke-width="2.2"/></svg><div class="ab" style="left:1237px;top:91px;width:1px;height:19px;background:#dedede"></div><div class="ab" style="left:1140px;top:93px;width:15.5px;height:15.5px;background:#a95436"></div><div class="t" style="left:1160.4px;top:97px;font-size:12px;color:#222;transform:scaleX(.935)">30W-1M</div><svg class="ab" style="left:1208.7px;top:95px" width="14" height="14"><rect x="0.75" y="0.75" width="12.5" height="12.5" rx="2" fill="#e4e4e4" stroke="#c2c2c2" stroke-width="1.5"/><path d="M4 4 L10 10 M10 4 L4 10" stroke="#fafafa" stroke-width="2.2"/></svg><div class="ab" style="left:1237px;top:87px;width:126px;height:25px;background:#ffffff"></div><div class="ab" style="left:1251.4px;top:92.5px;width:15.5px;height:15.5px;background:#1899f5"></div><div class="t" style="left:1272px;top:96px;font-size:12px;color:#222;transform:scaleX(.935)">4x30W-1M</div><svg class="ab" style="left:1332.4px;top:94px" width="14" height="14"><rect x="0.5" y="0.5" width="13" height="13" rx="2" fill="#f26b4a" stroke="#e0553a"/><path d="M4 4 L10 10 M10 4 L4 10" stroke="#fff" stroke-width="2"/></svg><div class="ab" style="left:1539px;top:91px;width:1px;height:19px;background:#dedede"></div><div class="ab" style="left:1375px;top:93px;width:15.5px;height:15.5px;background:#ff6a34"></div><div class="t" style="left:1394.6px;top:97px;font-size:12px;color:#222;transform:scaleX(.89)">ROBE-CONTROL-236-</div><svg class="ab" style="left:1511.8px;top:95px" width="14" height="14"><rect x="0.75" y="0.75" width="12.5" height="12.5" rx="2" fill="#e4e4e4" stroke="#c2c2c2" stroke-width="1.5"/><path d="M4 4 L10 10 M10 4 L4 10" stroke="#fafafa" stroke-width="2.2"/></svg><div class="ab" style="left:1541px;top:88px;width:35px;height:23px;background:#dbe5ee"></div><svg class="ab" style="left:1545px;top:92px" width="30" height="18"><path d="M1 8 L8 1 L8 15 Z" fill="#111"/><rect x="8" y="1" width="17" height="16" fill="#0d6f57"/><path d="M18 3 L24 8 L18 13 Z" fill="#111"/><rect x="27" y="5" width="2" height="9" fill="#333"/></svg><div class="ab" style="left:234px;top:113px;width:1341px;height:19px;background:#f0f0f0"></div><svg class="ab" style="left:238px;top:117px" width="10" height="12"><path d="M7 2 L3 6 L7 10" fill="none" stroke="#222" stroke-width="1.5"/></svg><svg class="ab" style="left:1562px;top:117px" width="10" height="12"><path d="M3 2 L7 6 L3 10" fill="none" stroke="#222" stroke-width="1.5"/></svg><div class="ab" style="left:1050px;top:115px;width:23px;height:16px;background:#cdcdcd"></div><div class="ab" style="left:234px;top:132px;width:1341px;height:970px;background:#f0eff2;border:1px solid #8e8e8e;border-right-color:#a0a0a0"></div><div class="ab" style="left:431px;top:136px;width:985px;height:960px;background:#fefefe"></div><svg class="ab" style="left:0;top:0" width="2048" height="1130" viewBox="0 0 2048 1130"><defs><linearGradient id="sg" gradientUnits="userSpaceOnUse" x1="639.9" y1="0" x2="1102.5" y2="0"><stop offset="0.0000" stop-color="rgb(97,0,97)"/><stop offset="0.0125" stop-color="rgb(111,0,119)"/><stop offset="0.0250" stop-color="rgb(121,0,141)"/><stop offset="0.0375" stop-color="rgb(128,0,161)"/><stop offset="0.0500" stop-color="rgb(131,0,181)"/><stop offset="0.0625" stop-color="rgb(130,0,200)"/><stop offset="0.0750" stop-color="rgb(126,0,219)"/><stop offset="0.0875" stop-color="rgb(118,0,237)"/><stop offset="0.1000" stop-color="rgb(106,0,255)"/><stop offset="0.1125" stop-color="rgb(84,0,255)"/><stop offset="0.1250" stop-color="rgb(61,0,255)"/><stop offset="0.1375" stop-color="rgb(35,0,255)"/><stop offset="0.1500" stop-color="rgb(0,0,255)"/><stop offset="0.1625" stop-color="rgb(0,40,255)"/><stop offset="0.1750" stop-color="rgb(0,70,255)"/><stop offset="0.1875" stop-color="rgb(0,97,255)"/><stop offset="0.2000" stop-color="rgb(0,123,255)"/><stop offset="0.2125" stop-color="rgb(0,146,255)"/><stop offset="0.2250" stop-color="rgb(0,169,255)"/><stop offset="0.2375" stop-color="rgb(0,192,255)"/><stop offset="0.2500" stop-color="rgb(0,213,255)"/><stop offset="0.2625" stop-color="rgb(0,234,255)"/><stop offset="0.2750" stop-color="rgb(0,255,255)"/><stop offset="0.2875" stop-color="rgb(0,255,203)"/><stop offset="0.3000" stop-color="rgb(0,255,146)"/><stop offset="0.3125" stop-color="rgb(0,255,84)"/><stop offset="0.3250" stop-color="rgb(0,255,0)"/><stop offset="0.3375" stop-color="rgb(31,255,0)"/><stop offset="0.3500" stop-color="rgb(54,255,0)"/><stop offset="0.3625" stop-color="rgb(74,255,0)"/><stop offset="0.3750" stop-color="rgb(94,255,0)"/><stop offset="0.3875" stop-color="rgb(112,255,0)"/><stop offset="0.4000" stop-color="rgb(129,255,0)"/><stop offset="0.4125" stop-color="rgb(146,255,0)"/><stop offset="0.4250" stop-color="rgb(163,255,0)"/><stop offset="0.4375" stop-color="rgb(179,255,0)"/><stop offset="0.4500" stop-color="rgb(195,255,0)"/><stop offset="0.4625" stop-color="rgb(210,255,0)"/><stop offset="0.4750" stop-color="rgb(225,255,0)"/><stop offset="0.4875" stop-color="rgb(240,255,0)"/><stop offset="0.5000" stop-color="rgb(255,255,0)"/><stop offset="0.5125" stop-color="rgb(255,239,0)"/><stop offset="0.5250" stop-color="rgb(255,223,0)"/><stop offset="0.5375" stop-color="rgb(255,207,0)"/><stop offset="0.5500" stop-color="rgb(255,190,0)"/><stop offset="0.5625" stop-color="rgb(255,173,0)"/><stop offset="0.5750" stop-color="rgb(255,155,0)"/><stop offset="0.5875" stop-color="rgb(255,137,0)"/><stop offset="0.6000" stop-color="rgb(255,119,0)"/><stop offset="0.6125" stop-color="rgb(255,99,0)"/><stop offset="0.6250" stop-color="rgb(255,79,0)"/><stop offset="0.6375" stop-color="rgb(255,57,0)"/><stop offset="0.6500" stop-color="rgb(255,33,0)"/><stop offset="0.6625" stop-color="rgb(255,0,0)"/><stop offset="0.6750" stop-color="rgb(255,0,0)"/><stop offset="0.6875" stop-color="rgb(255,0,0)"/><stop offset="0.7000" stop-color="rgb(255,0,0)"/><stop offset="0.7125" stop-color="rgb(255,0,0)"/><stop offset="0.7250" stop-color="rgb(255,0,0)"/><stop offset="0.7375" stop-color="rgb(255,0,0)"/><stop offset="0.7500" stop-color="rgb(255,0,0)"/><stop offset="0.7625" stop-color="rgb(255,0,0)"/><stop offset="0.7750" stop-color="rgb(255,0,0)"/><stop offset="0.7875" stop-color="rgb(255,0,0)"/><stop offset="0.8000" stop-color="rgb(255,0,0)"/><stop offset="0.8125" stop-color="rgb(246,0,0)"/><stop offset="0.8250" stop-color="rgb(237,0,0)"/><stop offset="0.8375" stop-color="rgb(228,0,0)"/><stop offset="0.8500" stop-color="rgb(219,0,0)"/><stop offset="0.8625" stop-color="rgb(209,0,0)"/><stop offset="0.8750" stop-color="rgb(200,0,0)"/><stop offset="0.8875" stop-color="rgb(190,0,0)"/><stop offset="0.9000" stop-color="rgb(181,0,0)"/><stop offset="0.9125" stop-color="rgb(171,0,0)"/><stop offset="0.9250" stop-color="rgb(161,0,0)"/><stop offset="0.9375" stop-color="rgb(151,0,0)"/><stop offset="0.9500" stop-color="rgb(141,0,0)"/><stop offset="0.9625" stop-color="rgb(130,0,0)"/><stop offset="0.9750" stop-color="rgb(119,0,0)"/><stop offset="0.9875" stop-color="rgb(109,0,0)"/><stop offset="1.0000" stop-color="rgb(97,0,0)"/></linearGradient></defs><path d="M316.1,163.8 V1069.2 M431.7,163.8 V1069.2 M547.4,163.8 V1069.2 M663.0,163.8 V1069.2 M778.7,163.8 V1069.2 M894.3,163.8 V1069.2 M1009.9,163.8 V1069.2 M1125.6,163.8 V1069.2 M1241.2,163.8 V1069.2 M1356.9,163.8 V1069.2 M1472.5,163.8 V1069.2 M287.3,1003.4 H1522.6 M287.3,896.6 H1522.6 M287.3,789.7 H1522.6 M287.3,682.9 H1522.6 M287.3,576.1 H1522.6 M287.3,469.2 H1522.6 M287.3,362.4 H1522.6 M287.3,255.6 H1522.6 M287.3,163.8 H1522.6 V1069.2 H287.3 Z" fill="none" stroke="#cbcbce" stroke-width="1" stroke-dasharray="3.6 3"/><path d="M432.0,1003.49 L432.5,1003.42 L433.0,1003.88 L433.5,1003.51 L434.0,1003.62 L434.5,1003.88 L435.0,1003.84 L435.5,1003.96 L436.0,1003.00 L436.5,1002.92 L437.0,1002.83 L437.5,1003.47 L438.0,1003.63 L438.5,1003.76 L439.0,1003.78 L439.5,1003.57 L440.0,1003.43 L440.5,1003.19 L441.0,1003.31 L441.5,1003.26 L442.0,1003.16 L442.5,1003.02 L443.0,1003.12 L443.5,1003.43 L444.0,1003.43 L444.5,1002.99 L445.0,1003.01 L445.5,1003.15 L446.0,1003.31 L446.5,1003.42 L447.0,1003.43 L447.5,1003.45 L448.0,1003.19 L448.5,1003.12 L449.0,1003.16 L449.5,1003.77 L450.0,1003.60 L450.5,1003.89 L451.0,1003.69 L451.5,1003.82 L452.0,1003.52 L452.5,1003.31 L453.0,1003.55 L453.5,1003.67 L454.0,1003.60 L454.5,1003.15 L455.0,1003.03 L455.5,1002.98 L456.0,1003.03 L456.5,1003.20 L457.0,1003.40 L457.5,1003.50 L458.0,1003.36 L458.5,1003.23 L459.0,1003.47 L459.5,1003.54 L460.0,1003.94 L460.5,1003.68 L461.0,1003.63 L461.5,1003.48 L462.0,1003.59 L462.5,1003.85 L463.0,1003.43 L463.5,1003.80 L464.0,1003.79 L464.5,1003.80 L465.0,1003.23 L465.5,1003.45 L466.0,1003.67 L466.5,1003.81 L467.0,1003.54 L467.5,1003.17 L468.0,1003.44 L468.5,1003.27 L469.0,1003.74 L469.5,1003.27 L470.0,1003.34 L470.5,1003.22 L471.0,1003.78 L471.5,1003.47 L472.0,1003.27 L472.5,1002.83 L473.0,1002.93 L473.5,1003.00 L474.0,1003.25 L474.5,1003.59 L475.0,1003.80 L475.5,1003.44 L476.0,1003.56 L476.5,1003.52 L477.0,1003.82 L477.5,1003.52 L478.0,1003.31 L478.5,1003.48 L479.0,1003.83 L479.5,1003.93 L480.0,1003.49 L480.5,1003.05 L481.0,1003.01 L481.5,1003.28 L482.0,1003.37 L482.5,1003.45 L483.0,1003.25 L483.5,1003.44 L484.0,1003.37 L484.5,1003.54 L485.0,1003.30 L485.5,1003.28 L486.0,1002.81 L486.5,1002.64 L487.0,1002.41 L487.5,1003.23 L488.0,1003.56 L488.5,1003.93 L489.0,1003.47 L489.5,1003.82 L490.0,1003.50 L490.5,1003.41 L491.0,1003.23 L491.5,1003.62 L492.0,1003.95 L492.5,1003.71 L493.0,1003.42 L493.5,1002.91 L494.0,1002.96 L494.5,1002.93 L495.0,1003.27 L495.5,1002.92 L496.0,1002.93 L496.5,1002.71 L497.0,1003.22 L497.5,1003.38 L498.0,1003.77 L498.5,1003.31 L499.0,1003.16 L499.5,1003.07 L500.0,1003.42 L500.5,1003.45 L501.0,1003.52 L501.5,1003.60 L502.0,1003.60 L502.5,1003.04 L503.0,1002.92 L503.5,1003.10 L504.0,1003.75 L504.5,1003.95 L505.0,1003.75 L505.5,1003.39 L506.0,1003.15 L506.5,1003.19 L507.0,1003.32 L507.5,1003.30 L508.0,1003.63 L508.5,1003.73 L509.0,1003.73 L509.5,1003.60 L510.0,1003.60 L510.5,1003.77 L511.0,1003.69 L511.5,1003.45 L512.0,1003.38 L512.5,1003.35 L513.0,1003.35 L513.5,1003.17 L514.0,1002.84 L514.5,1003.36 L515.0,1003.32 L515.5,1003.71 L516.0,1003.31 L516.5,1003.31 L517.0,1003.03 L517.5,1002.87 L518.0,1002.99 L518.5,1002.90 L519.0,1003.14 L519.5,1003.19 L520.0,1003.33 L520.5,1003.38 L521.0,1002.97 L521.5,1002.93 L522.0,1002.45 L522.5,1002.84 L523.0,1003.09 L523.5,1003.44 L524.0,1003.31 L524.5,1003.34 L525.0,1003.31 L525.5,1003.44 L526.0,1003.05 L526.5,1003.23 L527.0,1003.04 L527.5,1003.45 L528.0,1003.50 L528.5,1003.81 L529.0,1003.91 L529.5,1003.71 L530.0,1003.40 L530.5,1003.16 L531.0,1003.08 L531.5,1002.97 L532.0,1002.95 L532.5,1003.03 L533.0,1003.37 L533.5,1003.70 L534.0,1003.60 L534.5,1003.86 L535.0,1003.46 L535.5,1003.60 L536.0,1003.09 L536.5,1003.21 L537.0,1003.36 L537.5,1003.49 L538.0,1003.58 L538.5,1003.47 L539.0,1003.52 L539.5,1003.45 L540.0,1003.45 L540.5,1003.61 L541.0,1003.62 L541.5,1003.96 L542.0,1003.84 L542.5,1004.02 L543.0,1003.44 L543.5,1003.19 L544.0,1003.32 L544.5,1003.50 L545.0,1003.74 L545.5,1003.58 L546.0,1003.51 L546.5,1003.57 L547.0,1003.70 L547.5,1003.84 L548.0,1003.79 L548.5,1003.45 L549.0,1003.63 L549.5,1003.49 L550.0,1003.38 L550.5,1003.36 L551.0,1003.59 L551.5,1003.74 L552.0,1003.63 L552.5,1003.20 L553.0,1003.15 L553.5,1003.23 L554.0,1003.68 L554.5,1003.73 L555.0,1003.14 L555.5,1003.03 L556.0,1003.00 L556.5,1003.32 L557.0,1003.29 L557.5,1002.91 L558.0,1003.10 L558.5,1002.96 L559.0,1003.33 L559.5,1003.13 L560.0,1003.47 L560.5,1003.18 L561.0,1003.32 L561.5,1003.10 L562.0,1003.58 L562.5,1003.69 L563.0,1003.60 L563.5,1003.25 L564.0,1002.99 L564.5,1002.87 L565.0,1002.92 L565.5,1003.05 L566.0,1003.12 L566.5,1003.14 L567.0,1003.16 L567.5,1003.18 L568.0,1003.05 L568.5,1002.99 L569.0,1003.19 L569.5,1003.29 L570.0,1002.99 L570.5,1002.96 L571.0,1003.11 L571.5,1003.47 L572.0,1003.21 L572.5,1003.52 L573.0,1003.43 L573.5,1003.44 L574.0,1003.25 L574.5,1003.05 L575.0,1003.17 L575.5,1003.12 L576.0,1003.35 L576.5,1003.71 L577.0,1003.72 L577.5,1003.43 L578.0,1003.31 L578.5,1002.88 L579.0,1003.22 L579.5,1002.88 L580.0,1003.20 L580.5,1003.58 L581.0,1003.86 L581.5,1003.83 L582.0,1003.64 L582.5,1003.77 L583.0,1003.74 L583.5,1003.65 L584.0,1003.71 L584.5,1003.90 L585.0,1003.62 L585.5,1003.41 L586.0,1003.12 L586.5,1002.99 L587.0,1002.90 L587.5,1003.27 L588.0,1003.77 L588.5,1003.78 L589.0,1003.42 L589.5,1003.14 L590.0,1003.03 L590.5,1003.27 L591.0,1003.26 L591.5,1003.44 L592.0,1003.42 L592.5,1003.70 L593.0,1003.89 L593.5,1003.92 L594.0,1003.88 L594.5,1003.77 L595.0,1003.56 L595.5,1003.38 L596.0,1002.69 L596.5,1002.64 L597.0,1002.73 L597.5,1003.11 L598.0,1003.21 L598.5,1003.22 L599.0,1003.16 L599.5,1003.36 L600.0,1003.78 L600.5,1003.83 L601.0,1003.80 L601.5,1002.99 L602.0,1003.24 L602.5,1003.34 L603.0,1003.33 L603.5,1003.40 L604.0,1003.15 L604.5,1003.17 L605.0,1002.95 L605.5,1003.00 L606.0,1003.24 L606.5,1003.11 L607.0,1003.23 L607.5,1003.14 L608.0,1003.18 L608.5,1002.62 L609.0,1002.79 L609.5,1003.05 L610.0,1003.33 L610.5,1003.34 L611.0,1003.12 L611.5,1003.23 L612.0,1002.95 L612.5,1003.11 L613.0,1003.15 L613.5,1003.81 L614.0,1003.85 L614.5,1003.56 L615.0,1003.22 L615.5,1003.18 L616.0,1003.67 L616.5,1003.44 L617.0,1003.29 L617.5,1003.28 L618.0,1003.26 L618.5,1003.24 L619.0,1002.89 L619.5,1003.12 L620.0,1002.86 L620.5,1002.92 L621.0,1002.82 L621.5,1003.22 L622.0,1003.33 L622.5,1003.15 L623.0,1003.11 L623.5,1002.87 L624.0,1002.91 L624.5,1002.62 L625.0,1002.67 L625.5,1002.78 L626.0,1003.35 L626.5,1003.44 L627.0,1003.29 L627.5,1002.91 L628.0,1002.86 L628.5,1003.08 L629.0,1003.18 L629.5,1003.44 L630.0,1003.11 L630.5,1003.01 L631.0,1002.92 L631.5,1003.40 L632.0,1003.45 L632.5,1003.10 L633.0,1002.77 L633.5,1002.87 L634.0,1002.87 L634.5,1002.69 L635.0,1002.38 L635.5,1002.49 L636.0,1002.53 L636.5,1002.61 L637.0,1002.60 L637.5,1002.94 L638.0,1002.77 L638.5,1002.86 L639.0,1002.35 L639.5,1002.98 L640.0,1002.89 L640.5,1003.07 L641.0,1002.76 L641.5,1002.80 L642.0,1002.83 L642.5,1002.66 L643.0,1002.83 L643.5,1002.98 L644.0,1002.90 L644.5,1002.57 L645.0,1002.52 L645.5,1002.68 L646.0,1002.86 L646.5,1002.69 L647.0,1002.88 L647.5,1003.14 L648.0,1003.30 L648.5,1003.30 L649.0,1003.16 L649.5,1003.16 L650.0,1002.87 L650.5,1002.95 L651.0,1002.81 L651.5,1003.21 L652.0,1002.91 L652.5,1003.33 L653.0,1003.23 L653.5,1003.21 L654.0,1002.99 L654.5,1002.90 L655.0,1003.08 L655.5,1002.92 L656.0,1002.77 L656.5,1002.69 L657.0,1002.57 L657.5,1002.68 L658.0,1002.74 L658.5,1003.01 L659.0,1002.65 L659.5,1002.37 L660.0,1002.03 L660.5,1002.22 L661.0,1002.40 L661.5,1002.46 L662.0,1002.49 L662.5,1002.26 L663.0,1002.18 L663.5,1002.09 L664.0,1002.08 L664.5,1002.05 L665.0,1001.42 L665.5,1000.76 L666.0,1000.56 L666.5,1000.65 L667.0,1001.28 L667.5,1000.98 L668.0,1000.72 L668.5,1000.22 L669.0,999.82 L669.5,999.79 L670.0,999.30 L670.5,999.07 L671.0,998.63 L671.5,998.02 L672.0,997.41 L672.5,996.96 L673.0,996.86 L673.5,996.41 L674.0,995.60 L674.5,994.97 L675.0,994.49 L675.5,993.83 L676.0,992.93 L676.5,991.96 L677.0,991.07 L677.5,989.87 L678.0,988.87 L678.5,987.86 L679.0,986.98 L679.5,985.93 L680.0,984.81 L680.5,984.05 L681.0,982.90 L681.5,981.64 L682.0,979.60 L682.5,978.05 L683.0,976.15 L683.5,974.45 L684.0,972.13 L684.5,970.07 L685.0,967.98 L685.5,965.97 L686.0,963.69 L686.5,961.02 L687.0,958.31 L687.5,955.28 L688.0,951.96 L688.5,948.96 L689.0,945.88 L689.5,943.14 L690.0,939.86 L690.5,936.99 L691.0,933.92 L691.5,930.77 L692.0,927.00 L692.5,923.18 L693.0,919.24 L693.5,915.01 L694.0,909.98 L694.5,904.32 L695.0,898.48 L695.5,892.60 L696.0,886.29 L696.5,879.58 L697.0,872.44 L697.5,865.17 L698.0,857.53 L698.5,850.18 L699.0,843.32 L699.5,836.54 L700.0,829.92 L700.5,823.60 L701.0,817.56 L701.5,811.46 L702.0,804.58 L702.5,797.70 L703.0,789.58 L703.5,781.18 L704.0,771.41 L704.5,761.78 L705.0,751.27 L705.5,740.45 L706.0,728.69 L706.5,716.65 L707.0,704.08 L707.5,691.26 L708.0,677.75 L708.5,661.88 L709.0,644.56 L709.5,626.35 L710.0,608.47 L710.5,591.61 L711.0,576.06 L711.5,562.10 L712.0,548.98 L712.5,537.32 L713.0,526.53 L713.5,515.19 L714.0,502.54 L714.5,489.21 L715.0,475.14 L715.5,459.78 L716.0,442.70 L716.5,424.20 L717.0,404.97 L717.5,385.24 L718.0,365.92 L718.5,346.59 L719.0,327.33 L719.5,310.37 L720.0,295.39 L720.5,287.10 L721.0,280.78 L721.5,276.09 L722.0,272.69 L722.5,270.26 L723.0,269.32 L723.5,269.35 L724.0,270.26 L724.5,271.78 L725.0,273.52 L725.5,276.01 L726.0,278.87 L726.5,302.64 L727.0,311.15 L727.5,316.83 L728.0,322.18 L728.5,328.98 L729.0,335.64 L729.5,342.62 L730.0,351.29 L730.5,362.31 L731.0,385.18 L731.5,420.05 L732.0,454.31 L732.5,477.04 L733.0,493.74 L733.5,507.84 L734.0,520.53 L734.5,531.94 L735.0,543.35 L735.5,554.89 L736.0,567.97 L736.5,582.23 L737.0,597.84 L737.5,614.59 L738.0,631.38 L738.5,647.83 L739.0,663.14 L739.5,677.39 L740.0,689.55 L740.5,700.89 L741.0,712.05 L741.5,722.87 L742.0,733.04 L742.5,742.43 L743.0,752.04 L743.5,760.81 L744.0,769.62 L744.5,777.76 L745.0,786.44 L745.5,794.71 L746.0,803.38 L746.5,812.02 L747.0,820.38 L747.5,828.02 L748.0,835.37 L748.5,842.02 L749.0,848.24 L749.5,853.38 L750.0,857.70 L750.5,861.81 L751.0,865.33 L751.5,869.68 L752.0,873.96 L752.5,879.96 L753.0,886.35 L753.5,892.22 L754.0,896.50 L754.5,899.54 L755.0,902.56 L755.5,904.91 L756.0,907.32 L756.5,909.43 L757.0,911.47 L757.5,913.33 L758.0,915.34 L758.5,917.64 L759.0,920.02 L759.5,922.53 L760.0,924.80 L760.5,927.04 L761.0,928.99 L761.5,931.31 L762.0,933.48 L762.5,935.72 L763.0,937.34 L763.5,938.98 L764.0,940.12 L764.5,941.10 L765.0,941.43 L765.5,941.91 L766.0,942.82 L766.5,943.58 L767.0,944.32 L767.5,944.22 L768.0,944.25 L768.5,943.63 L769.0,942.83 L769.5,942.08 L770.0,941.23 L770.5,940.94 L771.0,940.30 L771.5,939.50 L772.0,938.14 L772.5,937.04 L773.0,935.99 L773.5,935.08 L774.0,933.41 L774.5,931.57 L775.0,929.58 L775.5,927.89 L776.0,926.50 L776.5,924.52 L777.0,922.23 L777.5,919.62 L778.0,917.10 L778.5,914.27 L779.0,910.28 L779.5,906.26 L780.0,902.00 L780.5,898.44 L781.0,895.66 L781.5,892.90 L782.0,890.56 L782.5,887.78 L783.0,885.28 L783.5,882.89 L784.0,880.89 L784.5,878.60 L785.0,875.75 L785.5,872.06 L786.0,868.30 L786.5,864.29 L787.0,859.67 L787.5,854.84 L788.0,850.23 L788.5,846.62 L789.0,842.47 L789.5,839.10 L790.0,834.94 L790.5,830.97 L791.0,826.57 L791.5,822.56 L792.0,819.23 L792.5,815.05 L793.0,811.40 L793.5,807.21 L794.0,803.48 L794.5,799.47 L795.0,795.37 L795.5,791.63 L796.0,787.52 L796.5,783.57 L797.0,779.23 L797.5,774.83 L798.0,770.45 L798.5,766.21 L799.0,762.19 L799.5,758.29 L800.0,754.19 L800.5,749.91 L801.0,745.90 L801.5,741.62 L802.0,737.37 L802.5,733.13 L803.0,729.07 L803.5,725.96 L804.0,723.54 L804.5,721.80 L805.0,720.30 L805.5,718.97 L806.0,718.40 L806.5,717.48 L807.0,717.28 L807.5,717.03 L808.0,717.53 L808.5,718.17 L809.0,719.06 L809.5,720.32 L810.0,721.69 L810.5,723.35 L811.0,724.73 L811.5,726.30 L812.0,727.95 L812.5,729.26 L813.0,730.25 L813.5,731.34 L814.0,733.02 L814.5,734.67 L815.0,736.59 L815.5,738.47 L816.0,740.98 L816.5,743.20 L817.0,745.41 L817.5,747.39 L818.0,750.45 L818.5,754.37 L819.0,759.05 L819.5,763.58 L820.0,768.41 L820.5,773.05 L821.0,777.58 L821.5,781.70 L822.0,785.77 L822.5,789.81 L823.0,793.54 L823.5,796.74 L824.0,799.56 L824.5,802.72 L825.0,806.04 L825.5,809.28 L826.0,811.90 L826.5,814.81 L827.0,817.75 L827.5,820.59 L828.0,823.29 L828.5,825.83 L829.0,828.74 L829.5,831.77 L830.0,834.29 L830.5,836.56 L831.0,838.20 L831.5,840.09 L832.0,841.88 L832.5,844.08 L833.0,846.25 L833.5,848.10 L834.0,850.14 L834.5,851.93 L835.0,853.91 L835.5,855.60 L836.0,857.33 L836.5,859.38 L837.0,861.01 L837.5,863.16 L838.0,864.85 L838.5,866.85 L839.0,868.21 L839.5,869.82 L840.0,871.15 L840.5,872.94 L841.0,874.04 L841.5,875.15 L842.0,876.30 L842.5,877.56 L843.0,879.11 L843.5,880.04 L844.0,881.55 L844.5,883.13 L845.0,884.41 L845.5,885.58 L846.0,886.58 L846.5,888.03 L847.0,889.34 L847.5,890.20 L848.0,891.28 L848.5,891.71 L849.0,892.54 L849.5,893.61 L850.0,895.10 L850.5,896.28 L851.0,897.28 L851.5,897.99 L852.0,898.87 L852.5,899.63 L853.0,900.67 L853.5,901.53 L854.0,902.09 L854.5,902.66 L855.0,903.67 L855.5,904.67 L856.0,905.95 L856.5,906.74 L857.0,907.89 L857.5,908.42 L858.0,909.48 L858.5,910.20 L859.0,911.02 L859.5,911.34 L860.0,912.04 L860.5,912.74 L861.0,913.39 L861.5,913.65 L862.0,914.25 L862.5,914.78 L863.0,915.38 L863.5,915.47 L864.0,915.87 L864.5,916.52 L865.0,917.62 L865.5,918.14 L866.0,918.13 L866.5,918.13 L867.0,918.40 L867.5,919.09 L868.0,919.74 L868.5,920.13 L869.0,920.38 L869.5,920.36 L870.0,921.08 L870.5,921.40 L871.0,921.97 L871.5,921.91 L872.0,922.38 L872.5,922.72 L873.0,923.31 L873.5,923.34 L874.0,923.60 L874.5,924.01 L875.0,924.82 L875.5,925.41 L876.0,925.42 L876.5,925.96 L877.0,926.32 L877.5,926.85 L878.0,926.68 L878.5,926.91 L879.0,927.20 L879.5,927.57 L880.0,927.63 L880.5,928.01 L881.0,928.11 L881.5,928.50 L882.0,928.48 L882.5,929.22 L883.0,929.32 L883.5,930.04 L884.0,930.31 L884.5,930.57 L885.0,930.65 L885.5,930.43 L886.0,930.81 L886.5,930.44 L887.0,930.53 L887.5,930.52 L888.0,930.72 L888.5,930.46 L889.0,930.27 L889.5,930.05 L890.0,929.66 L890.5,929.17 L891.0,929.04 L891.5,929.28 L892.0,929.09 L892.5,929.11 L893.0,929.30 L893.5,929.25 L894.0,928.86 L894.5,927.66 L895.0,927.12 L895.5,926.68 L896.0,926.73 L896.5,926.17 L897.0,925.62 L897.5,924.96 L898.0,924.49 L898.5,923.72 L899.0,922.97 L899.5,922.23 L900.0,921.22 L900.5,920.08 L901.0,919.47 L901.5,918.26 L902.0,917.51 L902.5,915.92 L903.0,915.40 L903.5,914.22 L904.0,913.24 L904.5,911.91 L905.0,910.64 L905.5,909.39 L906.0,908.43 L906.5,907.42 L907.0,906.19 L907.5,904.60 L908.0,903.26 L908.5,901.95 L909.0,900.47 L909.5,898.80 L910.0,896.98 L910.5,894.12 L911.0,890.74 L911.5,886.83 L912.0,883.49 L912.5,879.64 L913.0,876.08 L913.5,872.83 L914.0,869.89 L914.5,867.29 L915.0,863.88 L915.5,860.69 L916.0,857.49 L916.5,854.23 L917.0,850.79 L917.5,846.80 L918.0,842.91 L918.5,838.77 L919.0,834.34 L919.5,829.42 L920.0,824.15 L920.5,818.77 L921.0,812.77 L921.5,806.75 L922.0,800.32 L922.5,794.12 L923.0,786.91 L923.5,778.79 L924.0,769.99 L924.5,760.66 L925.0,751.28 L925.5,741.19 L926.0,730.96 L926.5,720.11 L927.0,709.38 L927.5,699.22 L928.0,688.50 L928.5,678.93 L929.0,668.62 L929.5,659.00 L930.0,648.59 L930.5,638.49 L931.0,629.08 L931.5,619.46 L932.0,609.56 L932.5,599.64 L933.0,590.36 L933.5,581.98 L934.0,573.05 L934.5,564.35 L935.0,556.05 L935.5,549.02 L936.0,542.74 L936.5,536.13 L937.0,530.92 L937.5,529.36 L938.0,532.08 L938.5,537.71 L939.0,544.75 L939.5,553.99 L940.0,566.00 L940.5,578.69 L941.0,591.88 L941.5,605.62 L942.0,620.14 L942.5,635.04 L943.0,650.73 L943.5,666.80 L944.0,682.87 L944.5,700.42 L945.0,719.51 L945.5,739.36 L946.0,758.66 L946.5,776.20 L947.0,790.31 L947.5,801.90 L948.0,812.11 L948.5,822.03 L949.0,831.33 L949.5,840.28 L950.0,848.40 L950.5,856.00 L951.0,863.52 L951.5,871.01 L952.0,878.41 L952.5,885.57 L953.0,892.60 L953.5,899.71 L954.0,906.81 L954.5,914.00 L955.0,920.48 L955.5,926.05 L956.0,930.61 L956.5,934.33 L957.0,937.58 L957.5,940.91 L958.0,944.15 L958.5,946.68 L959.0,948.65 L959.5,950.66 L960.0,952.53 L960.5,954.40 L961.0,955.69 L961.5,957.59 L962.0,959.24 L962.5,961.18 L963.0,963.16 L963.5,965.06 L964.0,966.89 L964.5,968.15 L965.0,969.79 L965.5,971.34 L966.0,972.66 L966.5,973.45 L967.0,973.95 L967.5,974.83 L968.0,976.22 L968.5,977.48 L969.0,978.61 L969.5,979.14 L970.0,980.15 L970.5,980.76 L971.0,981.38 L971.5,981.79 L972.0,982.35 L972.5,982.72 L973.0,983.03 L973.5,983.31 L974.0,983.76 L974.5,984.09 L975.0,984.60 L975.5,985.21 L976.0,985.42 L976.5,985.92 L977.0,986.30 L977.5,986.71 L978.0,987.06 L978.5,987.16 L979.0,987.38 L979.5,987.50 L980.0,987.82 L980.5,988.10 L981.0,988.23 L981.5,988.76 L982.0,989.39 L982.5,989.51 L983.0,989.39 L983.5,989.75 L984.0,990.44 L984.5,990.71 L985.0,990.72 L985.5,990.60 L986.0,990.79 L986.5,990.72 L987.0,991.21 L987.5,991.30 L988.0,991.22 L988.5,991.34 L989.0,991.39 L989.5,991.74 L990.0,991.66 L990.5,992.07 L991.0,992.62 L991.5,993.06 L992.0,993.07 L992.5,992.84 L993.0,992.62 L993.5,992.73 L994.0,992.89 L994.5,993.33 L995.0,993.86 L995.5,994.12 L996.0,994.09 L996.5,993.98 L997.0,994.42 L997.5,994.72 L998.0,995.12 L998.5,994.94 L999.0,995.15 L999.5,995.03 L1000.0,995.11 L1000.5,995.00 L1001.0,994.83 L1001.5,995.19 L1002.0,995.70 L1002.5,995.87 L1003.0,995.51 L1003.5,994.96 L1004.0,995.17 L1004.5,995.41 L1005.0,995.73 L1005.5,996.09 L1006.0,996.37 L1006.5,996.38 L1007.0,996.33 L1007.5,995.97 L1008.0,996.40 L1008.5,996.45 L1009.0,996.67 L1009.5,996.57 L1010.0,996.77 L1010.5,997.27 L1011.0,997.36 L1011.5,996.96 L1012.0,996.71 L1012.5,996.56 L1013.0,996.99 L1013.5,996.97 L1014.0,997.11 L1014.5,997.25 L1015.0,997.54 L1015.5,997.59 L1016.0,997.28 L1016.5,997.27 L1017.0,997.27 L1017.5,997.18 L1018.0,997.38 L1018.5,997.74 L1019.0,997.99 L1019.5,997.83 L1020.0,997.68 L1020.5,997.86 L1021.0,998.06 L1021.5,998.00 L1022.0,998.17 L1022.5,998.02 L1023.0,998.38 L1023.5,998.52 L1024.0,998.69 L1024.5,998.62 L1025.0,998.40 L1025.5,998.48 L1026.0,998.55 L1026.5,998.69 L1027.0,998.83 L1027.5,999.06 L1028.0,999.35 L1028.5,999.45 L1029.0,999.30 L1029.5,999.13 L1030.0,998.88 L1030.5,998.75 L1031.0,998.50 L1031.5,998.48 L1032.0,998.66 L1032.5,998.73 L1033.0,998.80 L1033.5,998.89 L1034.0,999.18 L1034.5,999.24 L1035.0,999.17 L1035.5,999.09 L1036.0,999.26 L1036.5,999.22 L1037.0,999.51 L1037.5,999.56 L1038.0,999.80 L1038.5,999.67 L1039.0,1000.08 L1039.5,1000.00 L1040.0,999.95 L1040.5,999.59 L1041.0,999.70 L1041.5,999.87 L1042.0,1000.17 L1042.5,1000.36 L1043.0,1000.57 L1043.5,1000.49 L1044.0,1000.21 L1044.5,1000.35 L1045.0,1000.18 L1045.5,1000.67 L1046.0,1000.69 L1046.5,1000.92 L1047.0,1000.47 L1047.5,1000.47 L1048.0,1000.88 L1048.5,1001.05 L1049.0,1000.98 L1049.5,1000.82 L1050.0,1001.11 L1050.5,1001.26 L1051.0,1001.09 L1051.5,1000.81 L1052.0,1000.98 L1052.5,1000.63 L1053.0,1000.78 L1053.5,1000.61 L1054.0,1000.93 L1054.5,1000.94 L1055.0,1000.48 L1055.5,1000.44 L1056.0,1000.55 L1056.5,1001.06 L1057.0,1001.38 L1057.5,1001.40 L1058.0,1001.24 L1058.5,1001.29 L1059.0,1000.97 L1059.5,1001.13 L1060.0,1001.07 L1060.5,1001.21 L1061.0,1001.57 L1061.5,1001.74 L1062.0,1001.83 L1062.5,1001.50 L1063.0,1001.36 L1063.5,1001.42 L1064.0,1001.55 L1064.5,1001.60 L1065.0,1001.94 L1065.5,1002.19 L1066.0,1001.96 L1066.5,1001.90 L1067.0,1001.72 L1067.5,1001.72 L1068.0,1001.38 L1068.5,1001.37 L1069.0,1001.73 L1069.5,1001.96 L1070.0,1002.06 L1070.5,1001.88 L1071.0,1001.86 L1071.5,1001.69 L1072.0,1001.67 L1072.5,1001.59 L1073.0,1001.31 L1073.5,1001.19 L1074.0,1001.64 L1074.5,1001.83 L1075.0,1002.32 L1075.5,1002.29 L1076.0,1002.34 L1076.5,1002.29 L1077.0,1002.11 L1077.5,1002.07 L1078.0,1002.08 L1078.5,1002.20 L1079.0,1002.35 L1079.5,1002.03 L1080.0,1001.80 L1080.5,1002.15 L1081.0,1002.50 L1081.5,1002.64 L1082.0,1002.04 L1082.5,1001.78 L1083.0,1001.62 L1083.5,1001.76 L1084.0,1001.99 L1084.5,1002.08 L1085.0,1002.22 L1085.5,1002.35 L1086.0,1002.46 L1086.5,1002.46 L1087.0,1002.49 L1087.5,1002.36 L1088.0,1002.33 L1088.5,1001.97 L1089.0,1002.26 L1089.5,1002.39 L1090.0,1002.33 L1090.5,1002.06 L1091.0,1002.23 L1091.5,1002.46 L1092.0,1002.36 L1092.5,1002.24 L1093.0,1002.22 L1093.5,1002.02 L1094.0,1002.02 L1094.5,1002.12 L1095.0,1002.76 L1095.5,1002.88 L1096.0,1002.60 L1096.5,1002.46 L1097.0,1002.56 L1097.5,1003.00 L1098.0,1002.98 L1098.5,1002.64 L1099.0,1002.61 L1099.5,1002.49 L1100.0,1002.72 L1100.5,1002.54 L1101.0,1002.58 L1101.5,1002.39 L1102.0,1002.54 L1102.5,1002.67 L1103.0,1002.69 L1103.5,1002.85 L1104.0,1002.80 L1104.5,1002.81 L1105.0,1002.40 L1105.5,1002.44 L1106.0,1002.57 L1106.5,1002.74 L1107.0,1002.87 L1107.5,1002.88 L1108.0,1002.84 L1108.5,1002.67 L1109.0,1002.82 L1109.5,1002.96 L1110.0,1003.39 L1110.5,1003.07 L1111.0,1003.11 L1111.5,1002.70 L1112.0,1003.04 L1112.5,1002.97 L1113.0,1002.94 L1113.5,1002.58 L1114.0,1002.81 L1114.5,1002.74 L1115.0,1002.95 L1115.5,1002.86 L1116.0,1002.93 L1116.5,1002.96 L1117.0,1002.88 L1117.5,1003.09 L1118.0,1003.00 L1118.5,1002.95 L1119.0,1002.86 L1119.5,1003.07 L1120.0,1003.18 L1120.5,1003.08 L1121.0,1002.69 L1121.5,1002.60 L1122.0,1002.43 L1122.5,1002.66 L1123.0,1002.86 L1123.5,1003.00 L1124.0,1003.17 L1124.5,1002.91 L1125.0,1002.84 L1125.5,1002.73 L1126.0,1002.82 L1126.5,1002.57 L1127.0,1002.48 L1127.5,1002.42 L1128.0,1002.72 L1128.5,1002.79 L1129.0,1002.86 L1129.5,1002.93 L1130.0,1003.34 L1130.5,1003.08 L1131.0,1003.34 L1131.5,1003.11 L1132.0,1003.27 L1132.5,1003.08 L1133.0,1003.11 L1133.5,1003.17 L1134.0,1003.38 L1134.5,1003.29 L1135.0,1003.60 L1135.5,1003.54 L1136.0,1003.35 L1136.5,1003.07 L1137.0,1002.87 L1137.5,1002.78 L1138.0,1002.81 L1138.5,1002.99 L1139.0,1003.20 L1139.5,1002.91 L1140.0,1002.79 L1140.5,1002.68 L1141.0,1002.99 L1141.5,1002.96 L1142.0,1002.94 L1142.5,1002.93 L1143.0,1003.00 L1143.5,1003.22 L1144.0,1003.37 L1144.5,1003.28 L1145.0,1003.01 L1145.5,1002.70 L1146.0,1002.76 L1146.5,1003.04 L1147.0,1003.10 L1147.5,1003.00 L1148.0,1003.12 L1148.5,1003.10 L1149.0,1003.11 L1149.5,1002.54 L1150.0,1002.89 L1150.5,1003.22 L1151.0,1003.38 L1151.5,1003.50 L1152.0,1003.41 L1152.5,1003.74 L1153.0,1003.61 L1153.5,1003.82 L1154.0,1003.67 L1154.5,1003.32 L1155.0,1002.90 L1155.5,1002.78 L1156.0,1003.02 L1156.5,1002.85 L1157.0,1002.83 L1157.5,1002.59 L1158.0,1003.12 L1158.5,1003.15 L1159.0,1003.54 L1159.5,1003.21 L1160.0,1003.24 L1160.5,1003.24 L1161.0,1003.27 L1161.5,1003.10 L1162.0,1002.81 L1162.5,1002.74 L1163.0,1003.10 L1163.5,1003.31 L1164.0,1003.62 L1164.5,1003.44 L1165.0,1003.11 L1165.5,1002.84 L1166.0,1002.86 L1166.5,1003.28 L1167.0,1003.28 L1167.5,1003.32 L1168.0,1003.46 L1168.5,1003.85 L1169.0,1003.87 L1169.5,1003.69 L1170.0,1003.09 L1170.5,1003.03 L1171.0,1003.06 L1171.5,1003.44 L1172.0,1003.16 L1172.5,1003.15 L1173.0,1002.93 L1173.5,1003.13 L1174.0,1002.71 L1174.5,1002.75 L1175.0,1002.90 L1175.5,1003.07 L1176.0,1003.15 L1176.5,1002.91 L1177.0,1003.02 L1177.5,1002.68 L1178.0,1002.87 L1178.5,1002.78 L1179.0,1003.25 L1179.5,1003.21 L1180.0,1003.29 L1180.5,1003.14 L1181.0,1003.01 L1181.5,1003.11 L1182.0,1003.29 L1182.5,1003.26 L1183.0,1003.21 L1183.5,1003.18 L1184.0,1003.18 L1184.5,1002.99 L1185.0,1003.34 L1185.5,1003.61 L1186.0,1003.61 L1186.5,1003.00 L1187.0,1003.02 L1187.5,1002.89 L1188.0,1003.18 L1188.5,1003.13 L1189.0,1003.38 L1189.5,1003.24 L1190.0,1003.06 L1190.5,1002.90 L1191.0,1002.91 L1191.5,1002.81 L1192.0,1003.11 L1192.5,1003.14 L1193.0,1003.09 L1193.5,1002.95 L1194.0,1002.72 L1194.5,1003.11 L1195.0,1003.17 L1195.5,1003.38 L1196.0,1003.28 L1196.5,1003.29 L1197.0,1003.27 L1197.5,1003.18 L1198.0,1002.91 L1198.5,1002.89 L1199.0,1002.90 L1199.5,1002.95 L1200.0,1003.16 L1200.5,1003.56 L1201.0,1003.43 L1201.5,1003.01 L1202.0,1002.72 L1202.5,1002.95 L1203.0,1003.35 L1203.5,1003.61 L1204.0,1003.62 L1204.5,1003.71 L1205.0,1003.31 L1205.5,1003.49 L1206.0,1003.17 L1206.5,1002.99 L1207.0,1002.54 L1207.5,1002.64 L1208.0,1002.80 L1208.5,1003.31 L1209.0,1003.37 L1209.5,1003.50 L1210.0,1003.07 L1210.5,1003.07 L1211.0,1003.04 L1211.5,1003.27 L1212.0,1003.39 L1212.5,1003.51 L1213.0,1003.27 L1213.5,1003.06 L1214.0,1002.95 L1214.5,1003.07 L1215.0,1003.19 L1215.5,1003.06 L1216.0,1002.94 L1216.5,1002.53 L1217.0,1002.51 L1217.5,1002.87 L1218.0,1003.25 L1218.5,1003.63 L1219.0,1003.71 L1219.5,1003.75 L1220.0,1003.43 L1220.5,1003.01 L1221.0,1002.99 L1221.5,1003.02 L1222.0,1003.51 L1222.5,1003.45 L1223.0,1003.78 L1223.5,1003.84 L1224.0,1003.78 L1224.5,1003.59 L1225.0,1003.37 L1225.5,1003.48 L1226.0,1003.67 L1226.5,1003.62 L1227.0,1003.63 L1227.5,1003.42 L1228.0,1003.61 L1228.5,1003.47 L1229.0,1003.42 L1229.5,1002.99 L1230.0,1002.84 L1230.5,1002.90 L1231.0,1003.24 L1231.5,1003.76 L1232.0,1003.79 L1232.5,1003.42 L1233.0,1002.80 L1233.5,1003.26 L1234.0,1003.64 L1234.5,1004.00 L1235.0,1003.74 L1235.5,1003.57 L1236.0,1003.50 L1236.5,1003.41 L1237.0,1003.45 L1237.5,1003.74 L1238.0,1003.83 L1238.5,1003.98 L1239.0,1003.54 L1239.5,1003.66 L1240.0,1003.54 L1240.5,1003.56 L1241.0,1003.28 L1241.5,1003.10 L1242.0,1003.36 L1242.5,1003.27 L1243.0,1003.25 L1243.5,1002.74 L1244.0,1002.69 L1244.5,1002.60 L1245.0,1003.00 L1245.5,1003.11 L1246.0,1003.09 L1246.5,1002.98 L1247.0,1002.75 L1247.5,1002.90 L1248.0,1002.63 L1248.5,1002.46 L1249.0,1002.74 L1249.5,1002.78 L1250.0,1003.13 L1250.5,1002.90 L1251.0,1003.25 L1251.5,1003.20 L1252.0,1003.49 L1252.5,1003.60 L1253.0,1003.86 L1253.5,1003.61 L1254.0,1003.32 L1254.5,1003.05 L1255.0,1003.04 L1255.5,1003.31 L1256.0,1003.76 L1256.5,1003.75 L1257.0,1003.62 L1257.5,1003.24 L1258.0,1003.06 L1258.5,1003.12 L1259.0,1003.22 L1259.5,1003.89 L1260.0,1003.76 L1260.5,1003.73 L1261.0,1003.45 L1261.5,1003.49 L1262.0,1003.66 L1262.5,1003.63 L1263.0,1003.35 L1263.5,1003.03 L1264.0,1002.77 L1264.5,1002.99 L1265.0,1003.01 L1265.5,1003.14 L1266.0,1002.87 L1266.5,1003.00 L1267.0,1002.90 L1267.5,1003.35 L1268.0,1003.40 L1268.5,1003.97 L1269.0,1004.27 L1269.5,1003.94 L1270.0,1003.24 L1270.5,1002.98 L1271.0,1003.26 L1271.5,1003.42 L1272.0,1003.52 L1272.5,1003.20 L1273.0,1003.49 L1273.5,1003.45 L1274.0,1004.25 L1274.5,1003.80 L1275.0,1003.66 L1275.5,1002.88 L1276.0,1003.33 L1276.5,1003.28 L1277.0,1003.56 L1277.5,1003.35 L1278.0,1003.04 L1278.5,1002.65 L1279.0,1002.44 L1279.5,1002.88 L1280.0,1003.13 L1280.5,1003.14 L1281.0,1002.97 L1281.5,1003.03 L1282.0,1003.18 L1282.5,1003.44 L1283.0,1003.50 L1283.5,1003.30 L1284.0,1003.32 L1284.5,1003.35 L1285.0,1003.49 L1285.5,1003.56 L1286.0,1003.60 L1286.5,1004.05 L1287.0,1003.91 L1287.5,1004.14 L1288.0,1004.00 L1288.5,1003.98 L1289.0,1003.78 L1289.5,1003.66 L1290.0,1004.00 L1290.5,1003.67 L1291.0,1003.69 L1291.5,1003.45 L1292.0,1003.85 L1292.5,1003.75 L1293.0,1003.73 L1293.5,1003.70 L1294.0,1003.84 L1294.5,1003.56 L1295.0,1003.62 L1295.5,1003.46 L1296.0,1003.50 L1296.5,1003.39 L1297.0,1003.25 L1297.5,1003.31 L1298.0,1003.50 L1298.5,1003.66 L1299.0,1003.65 L1299.5,1003.45 L1300.0,1003.46 L1300.5,1003.06 L1301.0,1003.02 L1301.5,1002.98 L1302.0,1003.44 L1302.5,1003.25 L1303.0,1003.34 L1303.5,1003.44 L1304.0,1003.90 L1304.5,1003.79 L1305.0,1003.52 L1305.5,1003.59 L1306.0,1003.81 L1306.5,1003.83 L1307.0,1003.37 L1307.5,1003.47 L1308.0,1003.66 L1308.5,1003.70 L1309.0,1003.56 L1309.5,1003.57 L1310.0,1003.81 L1310.5,1003.95 L1311.0,1003.87 L1311.5,1003.72 L1312.0,1003.74 L1312.5,1003.73 L1313.0,1003.59 L1313.5,1003.30 L1314.0,1003.15 L1314.5,1003.45 L1315.0,1003.24 L1315.5,1003.55 L1316.0,1003.12 L1316.5,1003.45 L1317.0,1003.44 L1317.5,1003.93 L1318.0,1003.93 L1318.5,1003.89 L1319.0,1003.86 L1319.5,1003.84 L1320.0,1003.64 L1320.5,1003.36 L1321.0,1003.36 L1321.5,1003.26 L1322.0,1003.60 L1322.5,1003.73 L1323.0,1004.15 L1323.5,1003.87 L1324.0,1003.96 L1324.5,1004.01 L1325.0,1003.89 L1325.5,1003.31 L1326.0,1002.83 L1326.5,1003.32 L1327.0,1003.63 L1327.5,1003.72 L1328.0,1003.44 L1328.5,1003.73 L1329.0,1003.94 L1329.5,1004.27 L1330.0,1004.20 L1330.5,1003.76 L1331.0,1003.34 L1331.5,1003.38 L1332.0,1004.03 L1332.5,1004.08 L1333.0,1003.93 L1333.5,1003.56 L1334.0,1003.76 L1334.5,1003.69 L1335.0,1003.75 L1335.5,1003.83 L1336.0,1004.14 L1336.5,1004.39 L1337.0,1004.34 L1337.5,1004.04 L1338.0,1003.84 L1338.5,1003.73 L1339.0,1003.61 L1339.5,1003.76 L1340.0,1003.50 L1340.5,1003.24 L1341.0,1003.02 L1341.5,1003.24 L1342.0,1003.38 L1342.5,1003.33 L1343.0,1003.34 L1343.5,1003.59 L1344.0,1003.85 L1344.5,1004.09 L1345.0,1003.95 L1345.5,1003.61 L1346.0,1003.60 L1346.5,1003.73 L1347.0,1003.91 L1347.5,1003.80 L1348.0,1003.93 L1348.5,1004.04 L1349.0,1004.32 L1349.5,1004.21 L1350.0,1004.19 L1350.5,1003.47 L1351.0,1003.30 L1351.5,1003.31 L1352.0,1003.70 L1352.5,1003.56 L1353.0,1003.22 L1353.5,1003.19 L1354.0,1003.53 L1354.5,1004.08 L1355.0,1004.18 L1355.5,1004.19 L1356.0,1004.07 L1356.5,1003.71 L1357.0,1004.02 L1357.5,1003.92 L1358.0,1004.16 L1358.5,1003.75 L1359.0,1003.44 L1359.5,1003.76 L1360.0,1003.98 L1360.5,1004.27 L1361.0,1004.00 L1361.5,1003.95 L1362.0,1004.11 L1362.5,1003.95 L1363.0,1004.07 L1363.5,1004.04 L1364.0,1003.99 L1364.5,1003.50 L1365.0,1003.25 L1365.5,1003.66 L1366.0,1004.13 L1366.5,1004.45 L1367.0,1004.51 L1367.5,1004.44 L1368.0,1004.06 L1368.5,1003.82 L1369.0,1003.89 L1369.5,1004.26 L1370.0,1004.52 L1370.5,1004.18 L1371.0,1004.41 L1371.5,1004.16 L1372.0,1004.64 L1372.5,1004.47 L1373.0,1004.79 L1373.5,1004.37 L1374.0,1004.21 L1374.5,1003.46 L1375.0,1003.83 L1375.5,1004.01 L1376.0,1004.41 L1376.5,1004.13 L1377.0,1003.99 L1377.5,1004.47 L1378.0,1004.32 L1378.5,1004.17 L1379.0,1003.75 L1379.5,1004.12 L1380.0,1004.12 L1380.5,1004.30 L1381.0,1004.19 L1381.5,1004.35 L1382.0,1004.03 L1382.5,1004.13 L1383.0,1004.17 L1383.5,1004.20 L1384.0,1004.09 L1384.5,1004.04 L1385.0,1004.29 L1385.5,1004.16 L1386.0,1004.29 L1386.5,1004.17 L1387.0,1003.98 L1387.5,1003.80 L1388.0,1004.04 L1388.5,1004.62 L1389.0,1004.67 L1389.5,1004.76 L1390.0,1004.84 L1390.5,1005.01 L1391.0,1004.99 L1391.5,1004.56 L1392.0,1004.69 L1392.5,1004.22 L1393.0,1004.52 L1393.5,1004.25 L1394.0,1004.42 L1394.5,1004.25 L1395.0,1004.15 L1395.5,1004.46 L1396.0,1004.91 L1396.5,1005.08 L1397.0,1005.21 L1397.5,1004.92 L1398.0,1004.72 L1398.5,1004.47 L1399.0,1004.48 L1399.5,1004.86 L1400.0,1004.88 L1400.5,1004.81 L1401.0,1004.90 L1401.5,1004.81 L1402.0,1004.97 L1402.5,1004.66 L1403.0,1004.80 L1403.5,1004.44 L1404.0,1004.33 L1404.5,1004.26 L1405.0,1004.46 L1405.5,1004.54 L1406.0,1004.31 L1406.5,1004.10 L1407.0,1004.16 L1407.5,1004.35 L1408.0,1004.27 L1408.5,1004.59 L1409.0,1004.56 L1409.5,1005.00 L1410.0,1004.48 L1410.5,1004.66 L1411.0,1004.53 L1411.5,1004.97 L1412.0,1004.88 L1412.5,1004.73 L1413.0,1004.24 L1413.5,1004.47 L1414.0,1004.70 L1414.5,1005.00 L1414.5,1003.4 L432.0,1003.4 Z" fill="url(#sg)"/><path d="M432.0,1003.49 L432.5,1003.42 L433.0,1003.88 L433.5,1003.51 L434.0,1003.62 L434.5,1003.88 L435.0,1003.84 L435.5,1003.96 L436.0,1003.00 L436.5,1002.92 L437.0,1002.83 L437.5,1003.47 L438.0,1003.63 L438.5,1003.76 L439.0,1003.78 L439.5,1003.57 L440.0,1003.43 L440.5,1003.19 L441.0,1003.31 L441.5,1003.26 L442.0,1003.16 L442.5,1003.02 L443.0,1003.12 L443.5,1003.43 L444.0,1003.43 L444.5,1002.99 L445.0,1003.01 L445.5,1003.15 L446.0,1003.31 L446.5,1003.42 L447.0,1003.43 L447.5,1003.45 L448.0,1003.19 L448.5,1003.12 L449.0,1003.16 L449.5,1003.77 L450.0,1003.60 L450.5,1003.89 L451.0,1003.69 L451.5,1003.82 L452.0,1003.52 L452.5,1003.31 L453.0,1003.55 L453.5,1003.67 L454.0,1003.60 L454.5,1003.15 L455.0,1003.03 L455.5,1002.98 L456.0,1003.03 L456.5,1003.20 L457.0,1003.40 L457.5,1003.50 L458.0,1003.36 L458.5,1003.23 L459.0,1003.47 L459.5,1003.54 L460.0,1003.94 L460.5,1003.68 L461.0,1003.63 L461.5,1003.48 L462.0,1003.59 L462.5,1003.85 L463.0,1003.43 L463.5,1003.80 L464.0,1003.79 L464.5,1003.80 L465.0,1003.23 L465.5,1003.45 L466.0,1003.67 L466.5,1003.81 L467.0,1003.54 L467.5,1003.17 L468.0,1003.44 L468.5,1003.27 L469.0,1003.74 L469.5,1003.27 L470.0,1003.34 L470.5,1003.22 L471.0,1003.78 L471.5,1003.47 L472.0,1003.27 L472.5,1002.83 L473.0,1002.93 L473.5,1003.00 L474.0,1003.25 L474.5,1003.59 L475.0,1003.80 L475.5,1003.44 L476.0,1003.56 L476.5,1003.52 L477.0,1003.82 L477.5,1003.52 L478.0,1003.31 L478.5,1003.48 L479.0,1003.83 L479.5,1003.93 L480.0,1003.49 L480.5,1003.05 L481.0,1003.01 L481.5,1003.28 L482.0,1003.37 L482.5,1003.45 L483.0,1003.25 L483.5,1003.44 L484.0,1003.37 L484.5,1003.54 L485.0,1003.30 L485.5,1003.28 L486.0,1002.81 L486.5,1002.64 L487.0,1002.41 L487.5,1003.23 L488.0,1003.56 L488.5,1003.93 L489.0,1003.47 L489.5,1003.82 L490.0,1003.50 L490.5,1003.41 L491.0,1003.23 L491.5,1003.62 L492.0,1003.95 L492.5,1003.71 L493.0,1003.42 L493.5,1002.91 L494.0,1002.96 L494.5,1002.93 L495.0,1003.27 L495.5,1002.92 L496.0,1002.93 L496.5,1002.71 L497.0,1003.22 L497.5,1003.38 L498.0,1003.77 L498.5,1003.31 L499.0,1003.16 L499.5,1003.07 L500.0,1003.42 L500.5,1003.45 L501.0,1003.52 L501.5,1003.60 L502.0,1003.60 L502.5,1003.04 L503.0,1002.92 L503.5,1003.10 L504.0,1003.75 L504.5,1003.95 L505.0,1003.75 L505.5,1003.39 L506.0,1003.15 L506.5,1003.19 L507.0,1003.32 L507.5,1003.30 L508.0,1003.63 L508.5,1003.73 L509.0,1003.73 L509.5,1003.60 L510.0,1003.60 L510.5,1003.77 L511.0,1003.69 L511.5,1003.45 L512.0,1003.38 L512.5,1003.35 L513.0,1003.35 L513.5,1003.17 L514.0,1002.84 L514.5,1003.36 L515.0,1003.32 L515.5,1003.71 L516.0,1003.31 L516.5,1003.31 L517.0,1003.03 L517.5,1002.87 L518.0,1002.99 L518.5,1002.90 L519.0,1003.14 L519.5,1003.19 L520.0,1003.33 L520.5,1003.38 L521.0,1002.97 L521.5,1002.93 L522.0,1002.45 L522.5,1002.84 L523.0,1003.09 L523.5,1003.44 L524.0,1003.31 L524.5,1003.34 L525.0,1003.31 L525.5,1003.44 L526.0,1003.05 L526.5,1003.23 L527.0,1003.04 L527.5,1003.45 L528.0,1003.50 L528.5,1003.81 L529.0,1003.91 L529.5,1003.71 L530.0,1003.40 L530.5,1003.16 L531.0,1003.08 L531.5,1002.97 L532.0,1002.95 L532.5,1003.03 L533.0,1003.37 L533.5,1003.70 L534.0,1003.60 L534.5,1003.86 L535.0,1003.46 L535.5,1003.60 L536.0,1003.09 L536.5,1003.21 L537.0,1003.36 L537.5,1003.49 L538.0,1003.58 L538.5,1003.47 L539.0,1003.52 L539.5,1003.45 L540.0,1003.45 L540.5,1003.61 L541.0,1003.62 L541.5,1003.96 L542.0,1003.84 L542.5,1004.02 L543.0,1003.44 L543.5,1003.19 L544.0,1003.32 L544.5,1003.50 L545.0,1003.74 L545.5,1003.58 L546.0,1003.51 L546.5,1003.57 L547.0,1003.70 L547.5,1003.84 L548.0,1003.79 L548.5,1003.45 L549.0,1003.63 L549.5,1003.49 L550.0,1003.38 L550.5,1003.36 L551.0,1003.59 L551.5,1003.74 L552.0,1003.63 L552.5,1003.20 L553.0,1003.15 L553.5,1003.23 L554.0,1003.68 L554.5,1003.73 L555.0,1003.14 L555.5,1003.03 L556.0,1003.00 L556.5,1003.32 L557.0,1003.29 L557.5,1002.91 L558.0,1003.10 L558.5,1002.96 L559.0,1003.33 L559.5,1003.13 L560.0,1003.47 L560.5,1003.18 L561.0,1003.32 L561.5,1003.10 L562.0,1003.58 L562.5,1003.69 L563.0,1003.60 L563.5,1003.25 L564.0,1002.99 L564.5,1002.87 L565.0,1002.92 L565.5,1003.05 L566.0,1003.12 L566.5,1003.14 L567.0,1003.16 L567.5,1003.18 L568.0,1003.05 L568.5,1002.99 L569.0,1003.19 L569.5,1003.29 L570.0,1002.99 L570.5,1002.96 L571.0,1003.11 L571.5,1003.47 L572.0,1003.21 L572.5,1003.52 L573.0,1003.43 L573.5,1003.44 L574.0,1003.25 L574.5,1003.05 L575.0,1003.17 L575.5,1003.12 L576.0,1003.35 L576.5,1003.71 L577.0,1003.72 L577.5,1003.43 L578.0,1003.31 L578.5,1002.88 L579.0,1003.22 L579.5,1002.88 L580.0,1003.20 L580.5,1003.58 L581.0,1003.86 L581.5,1003.83 L582.0,1003.64 L582.5,1003.77 L583.0,1003.74 L583.5,1003.65 L584.0,1003.71 L584.5,1003.90 L585.0,1003.62 L585.5,1003.41 L586.0,1003.12 L586.5,1002.99 L587.0,1002.90 L587.5,1003.27 L588.0,1003.77 L588.5,1003.78 L589.0,1003.42 L589.5,1003.14 L590.0,1003.03 L590.5,1003.27 L591.0,1003.26 L591.5,1003.44 L592.0,1003.42 L592.5,1003.70 L593.0,1003.89 L593.5,1003.92 L594.0,1003.88 L594.5,1003.77 L595.0,1003.56 L595.5,1003.38 L596.0,1002.69 L596.5,1002.64 L597.0,1002.73 L597.5,1003.11 L598.0,1003.21 L598.5,1003.22 L599.0,1003.16 L599.5,1003.36 L600.0,1003.78 L600.5,1003.83 L601.0,1003.80 L601.5,1002.99 L602.0,1003.24 L602.5,1003.34 L603.0,1003.33 L603.5,1003.40 L604.0,1003.15 L604.5,1003.17 L605.0,1002.95 L605.5,1003.00 L606.0,1003.24 L606.5,1003.11 L607.0,1003.23 L607.5,1003.14 L608.0,1003.18 L608.5,1002.62 L609.0,1002.79 L609.5,1003.05 L610.0,1003.33 L610.5,1003.34 L611.0,1003.12 L611.5,1003.23 L612.0,1002.95 L612.5,1003.11 L613.0,1003.15 L613.5,1003.81 L614.0,1003.85 L614.5,1003.56 L615.0,1003.22 L615.5,1003.18 L616.0,1003.67 L616.5,1003.44 L617.0,1003.29 L617.5,1003.28 L618.0,1003.26 L618.5,1003.24 L619.0,1002.89 L619.5,1003.12 L620.0,1002.86 L620.5,1002.92 L621.0,1002.82 L621.5,1003.22 L622.0,1003.33 L622.5,1003.15 L623.0,1003.11 L623.5,1002.87 L624.0,1002.91 L624.5,1002.62 L625.0,1002.67 L625.5,1002.78 L626.0,1003.35 L626.5,1003.44 L627.0,1003.29 L627.5,1002.91 L628.0,1002.86 L628.5,1003.08 L629.0,1003.18 L629.5,1003.44 L630.0,1003.11 L630.5,1003.01 L631.0,1002.92 L631.5,1003.40 L632.0,1003.45 L632.5,1003.10 L633.0,1002.77 L633.5,1002.87 L634.0,1002.87 L634.5,1002.69 L635.0,1002.38 L635.5,1002.49 L636.0,1002.53 L636.5,1002.61 L637.0,1002.60 L637.5,1002.94 L638.0,1002.77 L638.5,1002.86 L639.0,1002.35 L639.5,1002.98 L640.0,1002.89 L640.5,1003.07 L641.0,1002.76 L641.5,1002.80 L642.0,1002.83 L642.5,1002.66 L643.0,1002.83 L643.5,1002.98 L644.0,1002.90 L644.5,1002.57 L645.0,1002.52 L645.5,1002.68 L646.0,1002.86 L646.5,1002.69 L647.0,1002.88 L647.5,1003.14 L648.0,1003.30 L648.5,1003.30 L649.0,1003.16 L649.5,1003.16 L650.0,1002.87 L650.5,1002.95 L651.0,1002.81 L651.5,1003.21 L652.0,1002.91 L652.5,1003.33 L653.0,1003.23 L653.5,1003.21 L654.0,1002.99 L654.5,1002.90 L655.0,1003.08 L655.5,1002.92 L656.0,1002.77 L656.5,1002.69 L657.0,1002.57 L657.5,1002.68 L658.0,1002.74 L658.5,1003.01 L659.0,1002.65 L659.5,1002.37 L660.0,1002.03 L660.5,1002.22 L661.0,1002.40 L661.5,1002.46 L662.0,1002.49 L662.5,1002.26 L663.0,1002.18 L663.5,1002.09 L664.0,1002.08 L664.5,1002.05 L665.0,1001.42 L665.5,1000.76 L666.0,1000.56 L666.5,1000.65 L667.0,1001.28 L667.5,1000.98 L668.0,1000.72 L668.5,1000.22 L669.0,999.82 L669.5,999.79 L670.0,999.30 L670.5,999.07 L671.0,998.63 L671.5,998.02 L672.0,997.41 L672.5,996.96 L673.0,996.86 L673.5,996.41 L674.0,995.60 L674.5,994.97 L675.0,994.49 L675.5,993.83 L676.0,992.93 L676.5,991.96 L677.0,991.07 L677.5,989.87 L678.0,988.87 L678.5,987.86 L679.0,986.98 L679.5,985.93 L680.0,984.81 L680.5,984.05 L681.0,982.90 L681.5,981.64 L682.0,979.60 L682.5,978.05 L683.0,976.15 L683.5,974.45 L684.0,972.13 L684.5,970.07 L685.0,967.98 L685.5,965.97 L686.0,963.69 L686.5,961.02 L687.0,958.31 L687.5,955.28 L688.0,951.96 L688.5,948.96 L689.0,945.88 L689.5,943.14 L690.0,939.86 L690.5,936.99 L691.0,933.92 L691.5,930.77 L692.0,927.00 L692.5,923.18 L693.0,919.24 L693.5,915.01 L694.0,909.98 L694.5,904.32 L695.0,898.48 L695.5,892.60 L696.0,886.29 L696.5,879.58 L697.0,872.44 L697.5,865.17 L698.0,857.53 L698.5,850.18 L699.0,843.32 L699.5,836.54 L700.0,829.92 L700.5,823.60 L701.0,817.56 L701.5,811.46 L702.0,804.58 L702.5,797.70 L703.0,789.58 L703.5,781.18 L704.0,771.41 L704.5,761.78 L705.0,751.27 L705.5,740.45 L706.0,728.69 L706.5,716.65 L707.0,704.08 L707.5,691.26 L708.0,677.75 L708.5,661.88 L709.0,644.56 L709.5,626.35 L710.0,608.47 L710.5,591.61 L711.0,576.06 L711.5,562.10 L712.0,548.98 L712.5,537.32 L713.0,526.53 L713.5,515.19 L714.0,502.54 L714.5,489.21 L715.0,475.14 L715.5,459.78 L716.0,442.70 L716.5,424.20 L717.0,404.97 L717.5,385.24 L718.0,365.92 L718.5,346.59 L719.0,327.33 L719.5,310.37 L720.0,295.39 L720.5,287.10 L721.0,280.78 L721.5,276.09 L722.0,272.69 L722.5,270.26 L723.0,269.32 L723.5,269.35 L724.0,270.26 L724.5,271.78 L725.0,273.52 L725.5,276.01 L726.0,278.87 L726.5,302.64 L727.0,311.15 L727.5,316.83 L728.0,322.18 L728.5,328.98 L729.0,335.64 L729.5,342.62 L730.0,351.29 L730.5,362.31 L731.0,385.18 L731.5,420.05 L732.0,454.31 L732.5,477.04 L733.0,493.74 L733.5,507.84 L734.0,520.53 L734.5,531.94 L735.0,543.35 L735.5,554.89 L736.0,567.97 L736.5,582.23 L737.0,597.84 L737.5,614.59 L738.0,631.38 L738.5,647.83 L739.0,663.14 L739.5,677.39 L740.0,689.55 L740.5,700.89 L741.0,712.05 L741.5,722.87 L742.0,733.04 L742.5,742.43 L743.0,752.04 L743.5,760.81 L744.0,769.62 L744.5,777.76 L745.0,786.44 L745.5,794.71 L746.0,803.38 L746.5,812.02 L747.0,820.38 L747.5,828.02 L748.0,835.37 L748.5,842.02 L749.0,848.24 L749.5,853.38 L750.0,857.70 L750.5,861.81 L751.0,865.33 L751.5,869.68 L752.0,873.96 L752.5,879.96 L753.0,886.35 L753.5,892.22 L754.0,896.50 L754.5,899.54 L755.0,902.56 L755.5,904.91 L756.0,907.32 L756.5,909.43 L757.0,911.47 L757.5,913.33 L758.0,915.34 L758.5,917.64 L759.0,920.02 L759.5,922.53 L760.0,924.80 L760.5,927.04 L761.0,928.99 L761.5,931.31 L762.0,933.48 L762.5,935.72 L763.0,937.34 L763.5,938.98 L764.0,940.12 L764.5,941.10 L765.0,941.43 L765.5,941.91 L766.0,942.82 L766.5,943.58 L767.0,944.32 L767.5,944.22 L768.0,944.25 L768.5,943.63 L769.0,942.83 L769.5,942.08 L770.0,941.23 L770.5,940.94 L771.0,940.30 L771.5,939.50 L772.0,938.14 L772.5,937.04 L773.0,935.99 L773.5,935.08 L774.0,933.41 L774.5,931.57 L775.0,929.58 L775.5,927.89 L776.0,926.50 L776.5,924.52 L777.0,922.23 L777.5,919.62 L778.0,917.10 L778.5,914.27 L779.0,910.28 L779.5,906.26 L780.0,902.00 L780.5,898.44 L781.0,895.66 L781.5,892.90 L782.0,890.56 L782.5,887.78 L783.0,885.28 L783.5,882.89 L784.0,880.89 L784.5,878.60 L785.0,875.75 L785.5,872.06 L786.0,868.30 L786.5,864.29 L787.0,859.67 L787.5,854.84 L788.0,850.23 L788.5,846.62 L789.0,842.47 L789.5,839.10 L790.0,834.94 L790.5,830.97 L791.0,826.57 L791.5,822.56 L792.0,819.23 L792.5,815.05 L793.0,811.40 L793.5,807.21 L794.0,803.48 L794.5,799.47 L795.0,795.37 L795.5,791.63 L796.0,787.52 L796.5,783.57 L797.0,779.23 L797.5,774.83 L798.0,770.45 L798.5,766.21 L799.0,762.19 L799.5,758.29 L800.0,754.19 L800.5,749.91 L801.0,745.90 L801.5,741.62 L802.0,737.37 L802.5,733.13 L803.0,729.07 L803.5,725.96 L804.0,723.54 L804.5,721.80 L805.0,720.30 L805.5,718.97 L806.0,718.40 L806.5,717.48 L807.0,717.28 L807.5,717.03 L808.0,717.53 L808.5,718.17 L809.0,719.06 L809.5,720.32 L810.0,721.69 L810.5,723.35 L811.0,724.73 L811.5,726.30 L812.0,727.95 L812.5,729.26 L813.0,730.25 L813.5,731.34 L814.0,733.02 L814.5,734.67 L815.0,736.59 L815.5,738.47 L816.0,740.98 L816.5,743.20 L817.0,745.41 L817.5,747.39 L818.0,750.45 L818.5,754.37 L819.0,759.05 L819.5,763.58 L820.0,768.41 L820.5,773.05 L821.0,777.58 L821.5,781.70 L822.0,785.77 L822.5,789.81 L823.0,793.54 L823.5,796.74 L824.0,799.56 L824.5,802.72 L825.0,806.04 L825.5,809.28 L826.0,811.90 L826.5,814.81 L827.0,817.75 L827.5,820.59 L828.0,823.29 L828.5,825.83 L829.0,828.74 L829.5,831.77 L830.0,834.29 L830.5,836.56 L831.0,838.20 L831.5,840.09 L832.0,841.88 L832.5,844.08 L833.0,846.25 L833.5,848.10 L834.0,850.14 L834.5,851.93 L835.0,853.91 L835.5,855.60 L836.0,857.33 L836.5,859.38 L837.0,861.01 L837.5,863.16 L838.0,864.85 L838.5,866.85 L839.0,868.21 L839.5,869.82 L840.0,871.15 L840.5,872.94 L841.0,874.04 L841.5,875.15 L842.0,876.30 L842.5,877.56 L843.0,879.11 L843.5,880.04 L844.0,881.55 L844.5,883.13 L845.0,884.41 L845.5,885.58 L846.0,886.58 L846.5,888.03 L847.0,889.34 L847.5,890.20 L848.0,891.28 L848.5,891.71 L849.0,892.54 L849.5,893.61 L850.0,895.10 L850.5,896.28 L851.0,897.28 L851.5,897.99 L852.0,898.87 L852.5,899.63 L853.0,900.67 L853.5,901.53 L854.0,902.09 L854.5,902.66 L855.0,903.67 L855.5,904.67 L856.0,905.95 L856.5,906.74 L857.0,907.89 L857.5,908.42 L858.0,909.48 L858.5,910.20 L859.0,911.02 L859.5,911.34 L860.0,912.04 L860.5,912.74 L861.0,913.39 L861.5,913.65 L862.0,914.25 L862.5,914.78 L863.0,915.38 L863.5,915.47 L864.0,915.87 L864.5,916.52 L865.0,917.62 L865.5,918.14 L866.0,918.13 L866.5,918.13 L867.0,918.40 L867.5,919.09 L868.0,919.74 L868.5,920.13 L869.0,920.38 L869.5,920.36 L870.0,921.08 L870.5,921.40 L871.0,921.97 L871.5,921.91 L872.0,922.38 L872.5,922.72 L873.0,923.31 L873.5,923.34 L874.0,923.60 L874.5,924.01 L875.0,924.82 L875.5,925.41 L876.0,925.42 L876.5,925.96 L877.0,926.32 L877.5,926.85 L878.0,926.68 L878.5,926.91 L879.0,927.20 L879.5,927.57 L880.0,927.63 L880.5,928.01 L881.0,928.11 L881.5,928.50 L882.0,928.48 L882.5,929.22 L883.0,929.32 L883.5,930.04 L884.0,930.31 L884.5,930.57 L885.0,930.65 L885.5,930.43 L886.0,930.81 L886.5,930.44 L887.0,930.53 L887.5,930.52 L888.0,930.72 L888.5,930.46 L889.0,930.27 L889.5,930.05 L890.0,929.66 L890.5,929.17 L891.0,929.04 L891.5,929.28 L892.0,929.09 L892.5,929.11 L893.0,929.30 L893.5,929.25 L894.0,928.86 L894.5,927.66 L895.0,927.12 L895.5,926.68 L896.0,926.73 L896.5,926.17 L897.0,925.62 L897.5,924.96 L898.0,924.49 L898.5,923.72 L899.0,922.97 L899.5,922.23 L900.0,921.22 L900.5,920.08 L901.0,919.47 L901.5,918.26 L902.0,917.51 L902.5,915.92 L903.0,915.40 L903.5,914.22 L904.0,913.24 L904.5,911.91 L905.0,910.64 L905.5,909.39 L906.0,908.43 L906.5,907.42 L907.0,906.19 L907.5,904.60 L908.0,903.26 L908.5,901.95 L909.0,900.47 L909.5,898.80 L910.0,896.98 L910.5,894.12 L911.0,890.74 L911.5,886.83 L912.0,883.49 L912.5,879.64 L913.0,876.08 L913.5,872.83 L914.0,869.89 L914.5,867.29 L915.0,863.88 L915.5,860.69 L916.0,857.49 L916.5,854.23 L917.0,850.79 L917.5,846.80 L918.0,842.91 L918.5,838.77 L919.0,834.34 L919.5,829.42 L920.0,824.15 L920.5,818.77 L921.0,812.77 L921.5,806.75 L922.0,800.32 L922.5,794.12 L923.0,786.91 L923.5,778.79 L924.0,769.99 L924.5,760.66 L925.0,751.28 L925.5,741.19 L926.0,730.96 L926.5,720.11 L927.0,709.38 L927.5,699.22 L928.0,688.50 L928.5,678.93 L929.0,668.62 L929.5,659.00 L930.0,648.59 L930.5,638.49 L931.0,629.08 L931.5,619.46 L932.0,609.56 L932.5,599.64 L933.0,590.36 L933.5,581.98 L934.0,573.05 L934.5,564.35 L935.0,556.05 L935.5,549.02 L936.0,542.74 L936.5,536.13 L937.0,530.92 L937.5,529.36 L938.0,532.08 L938.5,537.71 L939.0,544.75 L939.5,553.99 L940.0,566.00 L940.5,578.69 L941.0,591.88 L941.5,605.62 L942.0,620.14 L942.5,635.04 L943.0,650.73 L943.5,666.80 L944.0,682.87 L944.5,700.42 L945.0,719.51 L945.5,739.36 L946.0,758.66 L946.5,776.20 L947.0,790.31 L947.5,801.90 L948.0,812.11 L948.5,822.03 L949.0,831.33 L949.5,840.28 L950.0,848.40 L950.5,856.00 L951.0,863.52 L951.5,871.01 L952.0,878.41 L952.5,885.57 L953.0,892.60 L953.5,899.71 L954.0,906.81 L954.5,914.00 L955.0,920.48 L955.5,926.05 L956.0,930.61 L956.5,934.33 L957.0,937.58 L957.5,940.91 L958.0,944.15 L958.5,946.68 L959.0,948.65 L959.5,950.66 L960.0,952.53 L960.5,954.40 L961.0,955.69 L961.5,957.59 L962.0,959.24 L962.5,961.18 L963.0,963.16 L963.5,965.06 L964.0,966.89 L964.5,968.15 L965.0,969.79 L965.5,971.34 L966.0,972.66 L966.5,973.45 L967.0,973.95 L967.5,974.83 L968.0,976.22 L968.5,977.48 L969.0,978.61 L969.5,979.14 L970.0,980.15 L970.5,980.76 L971.0,981.38 L971.5,981.79 L972.0,982.35 L972.5,982.72 L973.0,983.03 L973.5,983.31 L974.0,983.76 L974.5,984.09 L975.0,984.60 L975.5,985.21 L976.0,985.42 L976.5,985.92 L977.0,986.30 L977.5,986.71 L978.0,987.06 L978.5,987.16 L979.0,987.38 L979.5,987.50 L980.0,987.82 L980.5,988.10 L981.0,988.23 L981.5,988.76 L982.0,989.39 L982.5,989.51 L983.0,989.39 L983.5,989.75 L984.0,990.44 L984.5,990.71 L985.0,990.72 L985.5,990.60 L986.0,990.79 L986.5,990.72 L987.0,991.21 L987.5,991.30 L988.0,991.22 L988.5,991.34 L989.0,991.39 L989.5,991.74 L990.0,991.66 L990.5,992.07 L991.0,992.62 L991.5,993.06 L992.0,993.07 L992.5,992.84 L993.0,992.62 L993.5,992.73 L994.0,992.89 L994.5,993.33 L995.0,993.86 L995.5,994.12 L996.0,994.09 L996.5,993.98 L997.0,994.42 L997.5,994.72 L998.0,995.12 L998.5,994.94 L999.0,995.15 L999.5,995.03 L1000.0,995.11 L1000.5,995.00 L1001.0,994.83 L1001.5,995.19 L1002.0,995.70 L1002.5,995.87 L1003.0,995.51 L1003.5,994.96 L1004.0,995.17 L1004.5,995.41 L1005.0,995.73 L1005.5,996.09 L1006.0,996.37 L1006.5,996.38 L1007.0,996.33 L1007.5,995.97 L1008.0,996.40 L1008.5,996.45 L1009.0,996.67 L1009.5,996.57 L1010.0,996.77 L1010.5,997.27 L1011.0,997.36 L1011.5,996.96 L1012.0,996.71 L1012.5,996.56 L1013.0,996.99 L1013.5,996.97 L1014.0,997.11 L1014.5,997.25 L1015.0,997.54 L1015.5,997.59 L1016.0,997.28 L1016.5,997.27 L1017.0,997.27 L1017.5,997.18 L1018.0,997.38 L1018.5,997.74 L1019.0,997.99 L1019.5,997.83 L1020.0,997.68 L1020.5,997.86 L1021.0,998.06 L1021.5,998.00 L1022.0,998.17 L1022.5,998.02 L1023.0,998.38 L1023.5,998.52 L1024.0,998.69 L1024.5,998.62 L1025.0,998.40 L1025.5,998.48 L1026.0,998.55 L1026.5,998.69 L1027.0,998.83 L1027.5,999.06 L1028.0,999.35 L1028.5,999.45 L1029.0,999.30 L1029.5,999.13 L1030.0,998.88 L1030.5,998.75 L1031.0,998.50 L1031.5,998.48 L1032.0,998.66 L1032.5,998.73 L1033.0,998.80 L1033.5,998.89 L1034.0,999.18 L1034.5,999.24 L1035.0,999.17 L1035.5,999.09 L1036.0,999.26 L1036.5,999.22 L1037.0,999.51 L1037.5,999.56 L1038.0,999.80 L1038.5,999.67 L1039.0,1000.08 L1039.5,1000.00 L1040.0,999.95 L1040.5,999.59 L1041.0,999.70 L1041.5,999.87 L1042.0,1000.17 L1042.5,1000.36 L1043.0,1000.57 L1043.5,1000.49 L1044.0,1000.21 L1044.5,1000.35 L1045.0,1000.18 L1045.5,1000.67 L1046.0,1000.69 L1046.5,1000.92 L1047.0,1000.47 L1047.5,1000.47 L1048.0,1000.88 L1048.5,1001.05 L1049.0,1000.98 L1049.5,1000.82 L1050.0,1001.11 L1050.5,1001.26 L1051.0,1001.09 L1051.5,1000.81 L1052.0,1000.98 L1052.5,1000.63 L1053.0,1000.78 L1053.5,1000.61 L1054.0,1000.93 L1054.5,1000.94 L1055.0,1000.48 L1055.5,1000.44 L1056.0,1000.55 L1056.5,1001.06 L1057.0,1001.38 L1057.5,1001.40 L1058.0,1001.24 L1058.5,1001.29 L1059.0,1000.97 L1059.5,1001.13 L1060.0,1001.07 L1060.5,1001.21 L1061.0,1001.57 L1061.5,1001.74 L1062.0,1001.83 L1062.5,1001.50 L1063.0,1001.36 L1063.5,1001.42 L1064.0,1001.55 L1064.5,1001.60 L1065.0,1001.94 L1065.5,1002.19 L1066.0,1001.96 L1066.5,1001.90 L1067.0,1001.72 L1067.5,1001.72 L1068.0,1001.38 L1068.5,1001.37 L1069.0,1001.73 L1069.5,1001.96 L1070.0,1002.06 L1070.5,1001.88 L1071.0,1001.86 L1071.5,1001.69 L1072.0,1001.67 L1072.5,1001.59 L1073.0,1001.31 L1073.5,1001.19 L1074.0,1001.64 L1074.5,1001.83 L1075.0,1002.32 L1075.5,1002.29 L1076.0,1002.34 L1076.5,1002.29 L1077.0,1002.11 L1077.5,1002.07 L1078.0,1002.08 L1078.5,1002.20 L1079.0,1002.35 L1079.5,1002.03 L1080.0,1001.80 L1080.5,1002.15 L1081.0,1002.50 L1081.5,1002.64 L1082.0,1002.04 L1082.5,1001.78 L1083.0,1001.62 L1083.5,1001.76 L1084.0,1001.99 L1084.5,1002.08 L1085.0,1002.22 L1085.5,1002.35 L1086.0,1002.46 L1086.5,1002.46 L1087.0,1002.49 L1087.5,1002.36 L1088.0,1002.33 L1088.5,1001.97 L1089.0,1002.26 L1089.5,1002.39 L1090.0,1002.33 L1090.5,1002.06 L1091.0,1002.23 L1091.5,1002.46 L1092.0,1002.36 L1092.5,1002.24 L1093.0,1002.22 L1093.5,1002.02 L1094.0,1002.02 L1094.5,1002.12 L1095.0,1002.76 L1095.5,1002.88 L1096.0,1002.60 L1096.5,1002.46 L1097.0,1002.56 L1097.5,1003.00 L1098.0,1002.98 L1098.5,1002.64 L1099.0,1002.61 L1099.5,1002.49 L1100.0,1002.72 L1100.5,1002.54 L1101.0,1002.58 L1101.5,1002.39 L1102.0,1002.54 L1102.5,1002.67 L1103.0,1002.69 L1103.5,1002.85 L1104.0,1002.80 L1104.5,1002.81 L1105.0,1002.40 L1105.5,1002.44 L1106.0,1002.57 L1106.5,1002.74 L1107.0,1002.87 L1107.5,1002.88 L1108.0,1002.84 L1108.5,1002.67 L1109.0,1002.82 L1109.5,1002.96 L1110.0,1003.39 L1110.5,1003.07 L1111.0,1003.11 L1111.5,1002.70 L1112.0,1003.04 L1112.5,1002.97 L1113.0,1002.94 L1113.5,1002.58 L1114.0,1002.81 L1114.5,1002.74 L1115.0,1002.95 L1115.5,1002.86 L1116.0,1002.93 L1116.5,1002.96 L1117.0,1002.88 L1117.5,1003.09 L1118.0,1003.00 L1118.5,1002.95 L1119.0,1002.86 L1119.5,1003.07 L1120.0,1003.18 L1120.5,1003.08 L1121.0,1002.69 L1121.5,1002.60 L1122.0,1002.43 L1122.5,1002.66 L1123.0,1002.86 L1123.5,1003.00 L1124.0,1003.17 L1124.5,1002.91 L1125.0,1002.84 L1125.5,1002.73 L1126.0,1002.82 L1126.5,1002.57 L1127.0,1002.48 L1127.5,1002.42 L1128.0,1002.72 L1128.5,1002.79 L1129.0,1002.86 L1129.5,1002.93 L1130.0,1003.34 L1130.5,1003.08 L1131.0,1003.34 L1131.5,1003.11 L1132.0,1003.27 L1132.5,1003.08 L1133.0,1003.11 L1133.5,1003.17 L1134.0,1003.38 L1134.5,1003.29 L1135.0,1003.60 L1135.5,1003.54 L1136.0,1003.35 L1136.5,1003.07 L1137.0,1002.87 L1137.5,1002.78 L1138.0,1002.81 L1138.5,1002.99 L1139.0,1003.20 L1139.5,1002.91 L1140.0,1002.79 L1140.5,1002.68 L1141.0,1002.99 L1141.5,1002.96 L1142.0,1002.94 L1142.5,1002.93 L1143.0,1003.00 L1143.5,1003.22 L1144.0,1003.37 L1144.5,1003.28 L1145.0,1003.01 L1145.5,1002.70 L1146.0,1002.76 L1146.5,1003.04 L1147.0,1003.10 L1147.5,1003.00 L1148.0,1003.12 L1148.5,1003.10 L1149.0,1003.11 L1149.5,1002.54 L1150.0,1002.89 L1150.5,1003.22 L1151.0,1003.38 L1151.5,1003.50 L1152.0,1003.41 L1152.5,1003.74 L1153.0,1003.61 L1153.5,1003.82 L1154.0,1003.67 L1154.5,1003.32 L1155.0,1002.90 L1155.5,1002.78 L1156.0,1003.02 L1156.5,1002.85 L1157.0,1002.83 L1157.5,1002.59 L1158.0,1003.12 L1158.5,1003.15 L1159.0,1003.54 L1159.5,1003.21 L1160.0,1003.24 L1160.5,1003.24 L1161.0,1003.27 L1161.5,1003.10 L1162.0,1002.81 L1162.5,1002.74 L1163.0,1003.10 L1163.5,1003.31 L1164.0,1003.62 L1164.5,1003.44 L1165.0,1003.11 L1165.5,1002.84 L1166.0,1002.86 L1166.5,1003.28 L1167.0,1003.28 L1167.5,1003.32 L1168.0,1003.46 L1168.5,1003.85 L1169.0,1003.87 L1169.5,1003.69 L1170.0,1003.09 L1170.5,1003.03 L1171.0,1003.06 L1171.5,1003.44 L1172.0,1003.16 L1172.5,1003.15 L1173.0,1002.93 L1173.5,1003.13 L1174.0,1002.71 L1174.5,1002.75 L1175.0,1002.90 L1175.5,1003.07 L1176.0,1003.15 L1176.5,1002.91 L1177.0,1003.02 L1177.5,1002.68 L1178.0,1002.87 L1178.5,1002.78 L1179.0,1003.25 L1179.5,1003.21 L1180.0,1003.29 L1180.5,1003.14 L1181.0,1003.01 L1181.5,1003.11 L1182.0,1003.29 L1182.5,1003.26 L1183.0,1003.21 L1183.5,1003.18 L1184.0,1003.18 L1184.5,1002.99 L1185.0,1003.34 L1185.5,1003.61 L1186.0,1003.61 L1186.5,1003.00 L1187.0,1003.02 L1187.5,1002.89 L1188.0,1003.18 L1188.5,1003.13 L1189.0,1003.38 L1189.5,1003.24 L1190.0,1003.06 L1190.5,1002.90 L1191.0,1002.91 L1191.5,1002.81 L1192.0,1003.11 L1192.5,1003.14 L1193.0,1003.09 L1193.5,1002.95 L1194.0,1002.72 L1194.5,1003.11 L1195.0,1003.17 L1195.5,1003.38 L1196.0,1003.28 L1196.5,1003.29 L1197.0,1003.27 L1197.5,1003.18 L1198.0,1002.91 L1198.5,1002.89 L1199.0,1002.90 L1199.5,1002.95 L1200.0,1003.16 L1200.5,1003.56 L1201.0,1003.43 L1201.5,1003.01 L1202.0,1002.72 L1202.5,1002.95 L1203.0,1003.35 L1203.5,1003.61 L1204.0,1003.62 L1204.5,1003.71 L1205.0,1003.31 L1205.5,1003.49 L1206.0,1003.17 L1206.5,1002.99 L1207.0,1002.54 L1207.5,1002.64 L1208.0,1002.80 L1208.5,1003.31 L1209.0,1003.37 L1209.5,1003.50 L1210.0,1003.07 L1210.5,1003.07 L1211.0,1003.04 L1211.5,1003.27 L1212.0,1003.39 L1212.5,1003.51 L1213.0,1003.27 L1213.5,1003.06 L1214.0,1002.95 L1214.5,1003.07 L1215.0,1003.19 L1215.5,1003.06 L1216.0,1002.94 L1216.5,1002.53 L1217.0,1002.51 L1217.5,1002.87 L1218.0,1003.25 L1218.5,1003.63 L1219.0,1003.71 L1219.5,1003.75 L1220.0,1003.43 L1220.5,1003.01 L1221.0,1002.99 L1221.5,1003.02 L1222.0,1003.51 L1222.5,1003.45 L1223.0,1003.78 L1223.5,1003.84 L1224.0,1003.78 L1224.5,1003.59 L1225.0,1003.37 L1225.5,1003.48 L1226.0,1003.67 L1226.5,1003.62 L1227.0,1003.63 L1227.5,1003.42 L1228.0,1003.61 L1228.5,1003.47 L1229.0,1003.42 L1229.5,1002.99 L1230.0,1002.84 L1230.5,1002.90 L1231.0,1003.24 L1231.5,1003.76 L1232.0,1003.79 L1232.5,1003.42 L1233.0,1002.80 L1233.5,1003.26 L1234.0,1003.64 L1234.5,1004.00 L1235.0,1003.74 L1235.5,1003.57 L1236.0,1003.50 L1236.5,1003.41 L1237.0,1003.45 L1237.5,1003.74 L1238.0,1003.83 L1238.5,1003.98 L1239.0,1003.54 L1239.5,1003.66 L1240.0,1003.54 L1240.5,1003.56 L1241.0,1003.28 L1241.5,1003.10 L1242.0,1003.36 L1242.5,1003.27 L1243.0,1003.25 L1243.5,1002.74 L1244.0,1002.69 L1244.5,1002.60 L1245.0,1003.00 L1245.5,1003.11 L1246.0,1003.09 L1246.5,1002.98 L1247.0,1002.75 L1247.5,1002.90 L1248.0,1002.63 L1248.5,1002.46 L1249.0,1002.74 L1249.5,1002.78 L1250.0,1003.13 L1250.5,1002.90 L1251.0,1003.25 L1251.5,1003.20 L1252.0,1003.49 L1252.5,1003.60 L1253.0,1003.86 L1253.5,1003.61 L1254.0,1003.32 L1254.5,1003.05 L1255.0,1003.04 L1255.5,1003.31 L1256.0,1003.76 L1256.5,1003.75 L1257.0,1003.62 L1257.5,1003.24 L1258.0,1003.06 L1258.5,1003.12 L1259.0,1003.22 L1259.5,1003.89 L1260.0,1003.76 L1260.5,1003.73 L1261.0,1003.45 L1261.5,1003.49 L1262.0,1003.66 L1262.5,1003.63 L1263.0,1003.35 L1263.5,1003.03 L1264.0,1002.77 L1264.5,1002.99 L1265.0,1003.01 L1265.5,1003.14 L1266.0,1002.87 L1266.5,1003.00 L1267.0,1002.90 L1267.5,1003.35 L1268.0,1003.40 L1268.5,1003.97 L1269.0,1004.27 L1269.5,1003.94 L1270.0,1003.24 L1270.5,1002.98 L1271.0,1003.26 L1271.5,1003.42 L1272.0,1003.52 L1272.5,1003.20 L1273.0,1003.49 L1273.5,1003.45 L1274.0,1004.25 L1274.5,1003.80 L1275.0,1003.66 L1275.5,1002.88 L1276.0,1003.33 L1276.5,1003.28 L1277.0,1003.56 L1277.5,1003.35 L1278.0,1003.04 L1278.5,1002.65 L1279.0,1002.44 L1279.5,1002.88 L1280.0,1003.13 L1280.5,1003.14 L1281.0,1002.97 L1281.5,1003.03 L1282.0,1003.18 L1282.5,1003.44 L1283.0,1003.50 L1283.5,1003.30 L1284.0,1003.32 L1284.5,1003.35 L1285.0,1003.49 L1285.5,1003.56 L1286.0,1003.60 L1286.5,1004.05 L1287.0,1003.91 L1287.5,1004.14 L1288.0,1004.00 L1288.5,1003.98 L1289.0,1003.78 L1289.5,1003.66 L1290.0,1004.00 L1290.5,1003.67 L1291.0,1003.69 L1291.5,1003.45 L1292.0,1003.85 L1292.5,1003.75 L1293.0,1003.73 L1293.5,1003.70 L1294.0,1003.84 L1294.5,1003.56 L1295.0,1003.62 L1295.5,1003.46 L1296.0,1003.50 L1296.5,1003.39 L1297.0,1003.25 L1297.5,1003.31 L1298.0,1003.50 L1298.5,1003.66 L1299.0,1003.65 L1299.5,1003.45 L1300.0,1003.46 L1300.5,1003.06 L1301.0,1003.02 L1301.5,1002.98 L1302.0,1003.44 L1302.5,1003.25 L1303.0,1003.34 L1303.5,1003.44 L1304.0,1003.90 L1304.5,1003.79 L1305.0,1003.52 L1305.5,1003.59 L1306.0,1003.81 L1306.5,1003.83 L1307.0,1003.37 L1307.5,1003.47 L1308.0,1003.66 L1308.5,1003.70 L1309.0,1003.56 L1309.5,1003.57 L1310.0,1003.81 L1310.5,1003.95 L1311.0,1003.87 L1311.5,1003.72 L1312.0,1003.74 L1312.5,1003.73 L1313.0,1003.59 L1313.5,1003.30 L1314.0,1003.15 L1314.5,1003.45 L1315.0,1003.24 L1315.5,1003.55 L1316.0,1003.12 L1316.5,1003.45 L1317.0,1003.44 L1317.5,1003.93 L1318.0,1003.93 L1318.5,1003.89 L1319.0,1003.86 L1319.5,1003.84 L1320.0,1003.64 L1320.5,1003.36 L1321.0,1003.36 L1321.5,1003.26 L1322.0,1003.60 L1322.5,1003.73 L1323.0,1004.15 L1323.5,1003.87 L1324.0,1003.96 L1324.5,1004.01 L1325.0,1003.89 L1325.5,1003.31 L1326.0,1002.83 L1326.5,1003.32 L1327.0,1003.63 L1327.5,1003.72 L1328.0,1003.44 L1328.5,1003.73 L1329.0,1003.94 L1329.5,1004.27 L1330.0,1004.20 L1330.5,1003.76 L1331.0,1003.34 L1331.5,1003.38 L1332.0,1004.03 L1332.5,1004.08 L1333.0,1003.93 L1333.5,1003.56 L1334.0,1003.76 L1334.5,1003.69 L1335.0,1003.75 L1335.5,1003.83 L1336.0,1004.14 L1336.5,1004.39 L1337.0,1004.34 L1337.5,1004.04 L1338.0,1003.84 L1338.5,1003.73 L1339.0,1003.61 L1339.5,1003.76 L1340.0,1003.50 L1340.5,1003.24 L1341.0,1003.02 L1341.5,1003.24 L1342.0,1003.38 L1342.5,1003.33 L1343.0,1003.34 L1343.5,1003.59 L1344.0,1003.85 L1344.5,1004.09 L1345.0,1003.95 L1345.5,1003.61 L1346.0,1003.60 L1346.5,1003.73 L1347.0,1003.91 L1347.5,1003.80 L1348.0,1003.93 L1348.5,1004.04 L1349.0,1004.32 L1349.5,1004.21 L1350.0,1004.19 L1350.5,1003.47 L1351.0,1003.30 L1351.5,1003.31 L1352.0,1003.70 L1352.5,1003.56 L1353.0,1003.22 L1353.5,1003.19 L1354.0,1003.53 L1354.5,1004.08 L1355.0,1004.18 L1355.5,1004.19 L1356.0,1004.07 L1356.5,1003.71 L1357.0,1004.02 L1357.5,1003.92 L1358.0,1004.16 L1358.5,1003.75 L1359.0,1003.44 L1359.5,1003.76 L1360.0,1003.98 L1360.5,1004.27 L1361.0,1004.00 L1361.5,1003.95 L1362.0,1004.11 L1362.5,1003.95 L1363.0,1004.07 L1363.5,1004.04 L1364.0,1003.99 L1364.5,1003.50 L1365.0,1003.25 L1365.5,1003.66 L1366.0,1004.13 L1366.5,1004.45 L1367.0,1004.51 L1367.5,1004.44 L1368.0,1004.06 L1368.5,1003.82 L1369.0,1003.89 L1369.5,1004.26 L1370.0,1004.52 L1370.5,1004.18 L1371.0,1004.41 L1371.5,1004.16 L1372.0,1004.64 L1372.5,1004.47 L1373.0,1004.79 L1373.5,1004.37 L1374.0,1004.21 L1374.5,1003.46 L1375.0,1003.83 L1375.5,1004.01 L1376.0,1004.41 L1376.5,1004.13 L1377.0,1003.99 L1377.5,1004.47 L1378.0,1004.32 L1378.5,1004.17 L1379.0,1003.75 L1379.5,1004.12 L1380.0,1004.12 L1380.5,1004.30 L1381.0,1004.19 L1381.5,1004.35 L1382.0,1004.03 L1382.5,1004.13 L1383.0,1004.17 L1383.5,1004.20 L1384.0,1004.09 L1384.5,1004.04 L1385.0,1004.29 L1385.5,1004.16 L1386.0,1004.29 L1386.5,1004.17 L1387.0,1003.98 L1387.5,1003.80 L1388.0,1004.04 L1388.5,1004.62 L1389.0,1004.67 L1389.5,1004.76 L1390.0,1004.84 L1390.5,1005.01 L1391.0,1004.99 L1391.5,1004.56 L1392.0,1004.69 L1392.5,1004.22 L1393.0,1004.52 L1393.5,1004.25 L1394.0,1004.42 L1394.5,1004.25 L1395.0,1004.15 L1395.5,1004.46 L1396.0,1004.91 L1396.5,1005.08 L1397.0,1005.21 L1397.5,1004.92 L1398.0,1004.72 L1398.5,1004.47 L1399.0,1004.48 L1399.5,1004.86 L1400.0,1004.88 L1400.5,1004.81 L1401.0,1004.90 L1401.5,1004.81 L1402.0,1004.97 L1402.5,1004.66 L1403.0,1004.80 L1403.5,1004.44 L1404.0,1004.33 L1404.5,1004.26 L1405.0,1004.46 L1405.5,1004.54 L1406.0,1004.31 L1406.5,1004.10 L1407.0,1004.16 L1407.5,1004.35 L1408.0,1004.27 L1408.5,1004.59 L1409.0,1004.56 L1409.5,1005.00 L1410.0,1004.48 L1410.5,1004.66 L1411.0,1004.53 L1411.5,1004.97 L1412.0,1004.88 L1412.5,1004.73 L1413.0,1004.24 L1413.5,1004.47 L1414.0,1004.70 L1414.5,1005.00" fill="none" stroke="#2e9ad6" stroke-width="1.4"/><g font-family="Liberation Sans, sans-serif" font-weight="bold" font-size="11.5" fill="#111"><text x="281.5" y="1007.6" text-anchor="end">0</text><text x="281.5" y="900.8" text-anchor="end">10</text><text x="281.5" y="793.9" text-anchor="end">20</text><text x="281.5" y="687.1" text-anchor="end">30</text><text x="281.5" y="580.3" text-anchor="end">40</text><text x="281.5" y="473.4" text-anchor="end">50</text><text x="281.5" y="366.6" text-anchor="end">60</text><text x="281.5" y="259.8" text-anchor="end">70</text><text x="316.1" y="1085" text-anchor="middle">100</text><text x="431.7" y="1085" text-anchor="middle">200</text><text x="547.4" y="1085" text-anchor="middle">300</text><text x="663.0" y="1085" text-anchor="middle">400</text><text x="778.7" y="1085" text-anchor="middle">500</text><text x="894.3" y="1085" text-anchor="middle">600</text><text x="1009.9" y="1085" text-anchor="middle">700</text><text x="1125.6" y="1085" text-anchor="middle">800</text><text x="1241.2" y="1085" text-anchor="middle">900</text><text x="1356.9" y="1085" text-anchor="middle">1000</text><text x="1472.5" y="1085" text-anchor="middle">1100</text><text x="1542" y="1085" text-anchor="middle">nm</text><text x="244" y="157.8" font-size="12.4">mW/m²/nm</text></g></svg><div class="ab" style="left:1580px;top:87px;width:468px;height:24px;background:#a9a9a9"></div><div class="t" style="left:1584px;top:91px;font-size:12px;color:#111">Results</div><svg class="ab" style="left:2016px;top:94px" width="10" height="10" viewBox="0 0 10 10"><rect x="3" y="0.75" width="6" height="5" fill="none" stroke="#111" stroke-width="1.5"/><rect x="0.75" y="3.5" width="6" height="5.5" fill="#a9a9a9" stroke="#111" stroke-width="1.5"/></svg><svg class="ab" style="left:2033px;top:94px" width="10" height="10" viewBox="0 0 10 10"><path d="M1 1 L9 9 M9 1 L1 9" stroke="#111" stroke-width="1.6"/></svg><div class="t" style="left:1585px;top:120px">Norm</div><div class="ab" style="left:1673px;top:114px;width:371px;height:22px;background:#d2d2d2"></div><div class="t" style="left:1677px;top:120px;color:#999">CIE</div><div class="t" style="left:1585px;top:140px">Range Min</div><div class="ab" style="left:1673px;top:137px;width:371px;height:18px;background:#f0f0f0;border:1px solid #dadada"></div><div class="t" style="left:1677px;top:140px;color:#999">200,00</div><div class="t" style="left:1585px;top:159px">Range Max</div><div class="ab" style="left:1673px;top:156px;width:371px;height:18px;background:#f0f0f0;border:1px solid #dadada"></div><div class="t" style="left:1677px;top:159px;color:#999">1050,00</div><div class="t" style="left:2029px;top:139px;font-size:7px;line-height:7px;color:#555">&#9650;<br>&#9660;</div><div class="t" style="left:2029px;top:158px;font-size:7px;line-height:7px;color:#555">&#9650;<br>&#9660;</div><div class="ab" style="left:1587px;top:177px;width:12px;height:13px;background:#fff;border:1px solid #d8d8d8"></div><div class="t" style="left:1604px;top:178px;color:#999">Lock range</div><div class="ab" style="left:1673px;top:175px;width:371px;height:22px;background:#d2d2d2"></div><div class="t" style="left:1826px;top:181px;color:#999">Reset range</div><div class="t" style="left:1585px;top:204px">Ranges</div><div class="ab" style="left:1673px;top:198px;width:371px;height:22px;background:#d2d2d2"></div><div class="t" style="left:1677px;top:204px;color:#999">400-500</div><div class="t" style="left:2028px;top:120px;font-size:8px;color:#aaa">&#9660;</div><div class="t" style="left:2028px;top:204px;font-size:8px;color:#aaa">&#9660;</div><div class="ab" style="left:1580px;top:227px;width:467px;height:875px;background:#fff;border:1px solid #8e8e8e"></div><div class="t" style="left:1584px;top:233px">Name</div><div class="ab" style="left:1766px;top:229px;width:1px;height:18px;background:#e6e6e6"></div><div class="t" style="left:1771px;top:233px">Value</div><svg class="ab" style="left:1587px;top:253px" width="10" height="10"><path d="M1 3 L5 7 L9 3" fill="none" stroke="#333" stroke-width="1.4"/></svg><div class="t" style="left:1604px;top:253px;color:#111">Results</div><div class="ab" style="left:1581px;top:266px;width:465px;height:16px;background:#f8f8f8"></div><svg class="ab" style="left:1608px;top:269px" width="10" height="10"><path d="M3 1 L7 5 L3 9" fill="none" stroke="#8a8a8a" stroke-width="1.3"/></svg><div class="t" style="left:1626px;top:269px;color:#111">CIE 1931 2° observer</div><svg class="ab" style="left:1608px;top:285px" width="10" height="10"><path d="M3 1 L7 5 L3 9" fill="none" stroke="#8a8a8a" stroke-width="1.3"/></svg><div class="t" style="left:1626px;top:285px;color:#111">CIE 1964 10° observer</div><div class="ab" style="left:1581px;top:298px;width:465px;height:16px;background:#f8f8f8"></div><svg class="ab" style="left:1608px;top:301px" width="10" height="10"><path d="M3 1 L7 5 L3 9" fill="none" stroke="#8a8a8a" stroke-width="1.3"/></svg><div class="t" style="left:1626px;top:301px;color:#111">Other</div><svg class="ab" style="left:1608px;top:317px" width="10" height="10"><path d="M3 1 L7 5 L3 9" fill="none" stroke="#8a8a8a" stroke-width="1.3"/></svg><div class="t" style="left:1626px;top:317px;color:#111">Photobiological Safety</div><div class="ab" style="left:1581px;top:330px;width:465px;height:16px;background:#f8f8f8"></div><svg class="ab" style="left:1608px;top:333px" width="10" height="10"><path d="M1 3 L5 7 L9 3" fill="none" stroke="#333" stroke-width="1.4"/></svg><div class="t" style="left:1626px;top:333px;color:#111">Rendering Indices</div><div class="t" style="left:1647px;top:349px;color:#111">Ra</div><div class="t" style="left:1771px;top:349px;color:#111">78,3</div><div class="ab" style="left:1581px;top:362px;width:465px;height:16px;background:#f8f8f8"></div><div class="t" style="left:1647px;top:365px;color:#111">R<span style="font-size:8px;position:relative;top:1px">1</span></div><div class="t" style="left:1771px;top:365px;color:#111">74,5</div><div class="t" style="left:1647px;top:381px;color:#111">R<span style="font-size:8px;position:relative;top:1px">2</span></div><div class="t" style="left:1771px;top:381px;color:#111">76,2</div><div class="ab" style="left:1581px;top:394px;width:465px;height:16px;background:#f8f8f8"></div><div class="t" style="left:1647px;top:397px;color:#111">R<span style="font-size:8px;position:relative;top:1px">3</span></div><div class="t" style="left:1771px;top:397px;color:#111">81,1</div><div class="t" style="left:1647px;top:413px;color:#111">R<span style="font-size:8px;position:relative;top:1px">4</span></div><div class="t" style="left:1771px;top:413px;color:#111">80,5</div><div class="ab" style="left:1581px;top:426px;width:465px;height:16px;background:#f8f8f8"></div><div class="t" style="left:1647px;top:429px;color:#111">R<span style="font-size:8px;position:relative;top:1px">5</span></div><div class="t" style="left:1771px;top:429px;color:#111">80,8</div><div class="t" style="left:1647px;top:445px;color:#111">R<span style="font-size:8px;position:relative;top:1px">6</span></div><div class="t" style="left:1771px;top:445px;color:#111">71,9</div><div class="ab" style="left:1581px;top:458px;width:465px;height:16px;background:#f8f8f8"></div><div class="t" style="left:1647px;top:461px;color:#111">R<span style="font-size:8px;position:relative;top:1px">7</span></div><div class="t" style="left:1771px;top:461px;color:#111">90,6</div><div class="t" style="left:1647px;top:477px;color:#111">R<span style="font-size:8px;position:relative;top:1px">8</span></div><div class="t" style="left:1771px;top:477px;color:#111">70,6</div><div class="ab" style="left:1581px;top:490px;width:465px;height:16px;background:#f8f8f8"></div><div class="t" style="left:1647px;top:493px;color:#111">R<span style="font-size:8px;position:relative;top:1px">9</span></div><div class="t" style="left:1771px;top:493px;color:#111">-20,5</div><div class="t" style="left:1647px;top:509px;color:#111">R<span style="font-size:8px;position:relative;top:1px">10</span></div><div class="t" style="left:1771px;top:509px;color:#111">48,2</div><div class="ab" style="left:1581px;top:522px;width:465px;height:16px;background:#f8f8f8"></div><div class="t" style="left:1647px;top:525px;color:#111">R<span style="font-size:8px;position:relative;top:1px">11</span></div><div class="t" style="left:1771px;top:525px;color:#111">71,4</div><div class="t" style="left:1647px;top:541px;color:#111">R<span style="font-size:8px;position:relative;top:1px">12</span></div><div class="t" style="left:1771px;top:541px;color:#111">60,0</div><div class="ab" style="left:1581px;top:554px;width:465px;height:16px;background:#f8f8f8"></div><div class="t" style="left:1647px;top:557px;color:#111">R<span style="font-size:8px;position:relative;top:1px">13</span></div><div class="t" style="left:1771px;top:557px;color:#111">70,6</div><div class="t" style="left:1647px;top:573px;color:#111">R<span style="font-size:8px;position:relative;top:1px">14</span></div><div class="t" style="left:1771px;top:573px;color:#111">92,4</div><div class="ab" style="left:1581px;top:586px;width:465px;height:16px;background:#f8f8f8"></div><div class="t" style="left:1647px;top:589px;color:#111">R<span style="font-size:8px;position:relative;top:1px">15</span></div><div class="t" style="left:1771px;top:589px;color:#111">63,0</div><svg class="ab" style="left:1608px;top:605px" width="10" height="10"><path d="M3 1 L7 5 L3 9" fill="none" stroke="#8a8a8a" stroke-width="1.3"/></svg><div class="t" style="left:1626px;top:605px;color:#111">Metamerism Indices</div><div class="ab" style="left:1581px;top:618px;width:465px;height:16px;background:#f8f8f8"></div><svg class="ab" style="left:1608px;top:621px" width="10" height="10"><path d="M3 1 L7 5 L3 9" fill="none" stroke="#8a8a8a" stroke-width="1.3"/></svg><div class="t" style="left:1626px;top:621px;color:#111">TM-30-15 Main</div><svg class="ab" style="left:1608px;top:637px" width="10" height="10"><path d="M3 1 L7 5 L3 9" fill="none" stroke="#8a8a8a" stroke-width="1.3"/></svg><div class="t" style="left:1626px;top:637px;color:#111">TM-30-15 Hue Bin Fidelit...</div><div class="ab" style="left:1581px;top:650px;width:465px;height:16px;background:#f8f8f8"></div><svg class="ab" style="left:1608px;top:653px" width="10" height="10"><path d="M3 1 L7 5 L3 9" fill="none" stroke="#8a8a8a" stroke-width="1.3"/></svg><div class="t" style="left:1626px;top:653px;color:#111">TM-30-15 Hue Bin Chang...</div><svg class="ab" style="left:1608px;top:669px" width="10" height="10"><path d="M3 1 L7 5 L3 9" fill="none" stroke="#8a8a8a" stroke-width="1.3"/></svg><div class="t" style="left:1626px;top:669px;color:#111">TM-30-15 Fidelity Index ...</div><div class="ab" style="left:1581px;top:682px;width:465px;height:16px;background:#f8f8f8"></div><svg class="ab" style="left:1608px;top:685px" width="10" height="10"><path d="M1 3 L5 7 L9 3" fill="none" stroke="#333" stroke-width="1.4"/></svg><div class="t" style="left:1626px;top:685px;color:#111">Human Centric Lighting</div><div class="t" style="left:1647px;top:701px;color:#111">EML</div><div class="t" style="left:1771px;top:701px;color:#111">-</div><div class="ab" style="left:1581px;top:714px;width:465px;height:16px;background:#f8f8f8"></div><div class="t" style="left:1647px;top:717px;color:#111">Melanopic ratio</div><div class="t" style="left:1771px;top:717px;color:#111">-</div><div class="ab" style="left:323px;top:1104px;width:1px;height:24px;background:#dcdcdc"></div><div class="ab" style="left:329px;top:1106px;width:1660px;height:22px;background:#e6e4e8;border:1px solid #cfcdd2;border-bottom:none"></div><div class="t" style="left:1997px;top:1111px">0%</div><div class="ab" style="left:2027px;top:1104px;width:1px;height:23px;background:#dddddd"></div><svg class="ab" style="left:2036px;top:1116px" width="11" height="11"><path d="M10 2 L2 10 M10 6 L6 10" stroke="#c8c8c8" stroke-width="1"/></svg><div class="ab" style="left:0;top:1128px;width:51px;height:2px;background:#333"></div><div class="ab" style="left:418px;top:1128px;width:1630px;height:2px;background:#333"></div>
</body></html>
